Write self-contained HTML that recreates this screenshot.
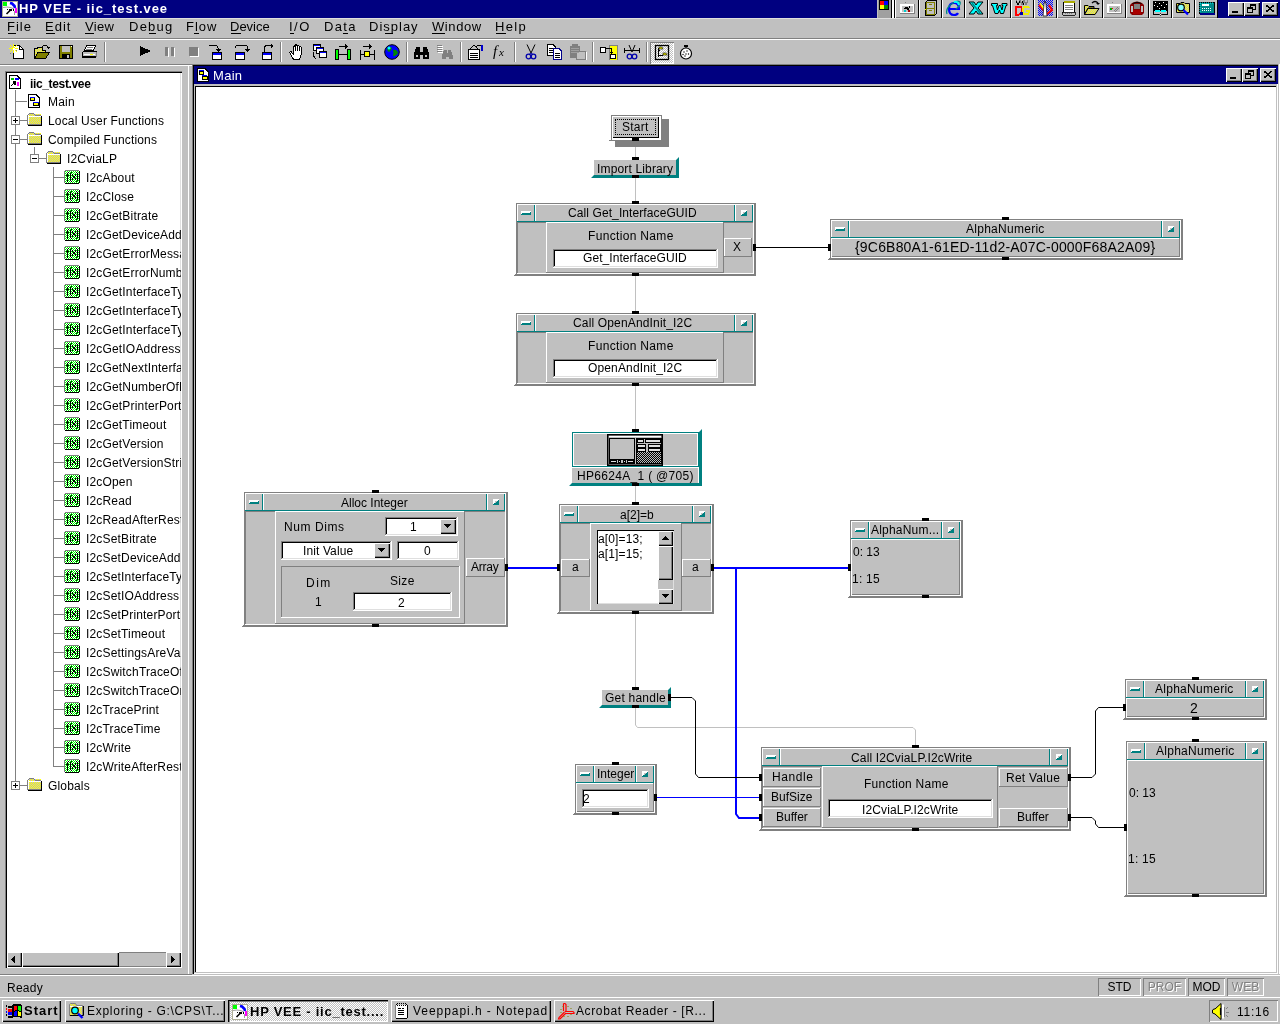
<!DOCTYPE html>
<html><head><meta charset="utf-8"><style>
html,body{margin:0;padding:0;}
body{width:1280px;height:1024px;overflow:hidden;position:relative;background:#c0c0c0;font-family:"Liberation Sans",sans-serif;}
.a{position:absolute;}
.t{position:absolute;white-space:pre;font-family:"Liberation Sans",sans-serif;will-change:transform;}
u{text-decoration:underline;text-underline-offset:1px;text-decoration-thickness:1px;}
</style></head><body>
<svg class="a" width="0" height="0" style="left:0;top:0"><defs><pattern id="chkG" width="2" height="2" patternUnits="userSpaceOnUse"><rect width="2" height="2" fill="#fff"/><rect width="1" height="1" fill="#0f0"/><rect x="1" y="1" width="1" height="1" fill="#0f0"/></pattern><pattern id="chkB" width="2" height="2" patternUnits="userSpaceOnUse"><rect width="2" height="2" fill="#00f"/><rect width="1" height="1" fill="#c0c0c0"/><rect x="1" y="1" width="1" height="1" fill="#c0c0c0"/></pattern><pattern id="chkK" width="2" height="2" patternUnits="userSpaceOnUse"><rect width="2" height="2" fill="#c0c0c0"/><rect width="1" height="1" fill="#000"/><rect x="1" y="1" width="1" height="1" fill="#000"/></pattern><pattern id="chkW" width="2" height="2" patternUnits="userSpaceOnUse"><rect width="2" height="2" fill="#fff"/><rect width="1" height="1" fill="#c0c0c0"/><rect x="1" y="1" width="1" height="1" fill="#c0c0c0"/></pattern><pattern id="chkY" width="2" height="2" patternUnits="userSpaceOnUse"><rect width="2" height="2" fill="#c0c0c0"/><rect width="1" height="1" fill="#ff0"/><rect x="1" y="1" width="1" height="1" fill="#ff0"/></pattern><symbol id="fx" viewBox="0 0 16 14"><rect x="1" y="1" width="14" height="12" fill="url(#chkG)"/><rect x="1" y="0" width="14" height="1" fill="#808080"/><rect x="0" y="1" width="1" height="12" fill="#808080"/><rect x="15" y="1" width="1" height="12" fill="#000"/><rect x="1" y="13" width="14" height="1" fill="#000"/><rect x="3" y="3" width="1" height="9" fill="#000"/><rect x="2" y="5" width="3" height="1" fill="#000"/><rect x="4" y="2" width="1" height="1" fill="#000"/><rect x="6" y="3" width="1" height="8" fill="#000"/><rect x="7" y="2" width="1" height="1" fill="#000"/><rect x="7" y="11" width="1" height="1" fill="#000"/><rect x="8" y="4" width="1" height="2" fill="#000"/><rect x="11" y="4" width="1" height="2" fill="#000"/><rect x="9" y="6" width="2" height="2" fill="#000"/><rect x="8" y="8" width="1" height="2" fill="#000"/><rect x="11" y="8" width="1" height="2" fill="#000"/><rect x="13" y="3" width="1" height="8" fill="#000"/><rect x="12" y="2" width="1" height="1" fill="#000"/><rect x="12" y="11" width="1" height="1" fill="#000"/></symbol><symbol id="fold" viewBox="0 0 15 13"><rect x="2" y="1" width="12" height="11" fill="url(#chkY)"/><rect x="1" y="3" width="13" height="9" fill="url(#chkY)"/><rect x="2" y="0" width="5" height="1" fill="#808080"/><rect x="1" y="1" width="1" height="1" fill="#808080"/><rect x="7" y="1" width="1" height="1" fill="#808080"/><rect x="8" y="2" width="6" height="1" fill="#808080"/><rect x="0" y="2" width="1" height="10" fill="#808080"/><rect x="1" y="2" width="1" height="10" fill="#fff"/><rect x="2" y="3" width="12" height="1" fill="#fff"/><rect x="14" y="3" width="1" height="10" fill="#000"/><rect x="1" y="12" width="14" height="1" fill="#000"/><rect x="1" y="11" width="13" height="1" fill="#808080"/></symbol></defs></svg>
<div class="a" style="left:0px;top:0px;width:1280px;height:18px;background:#000080;"></div>
<svg class="a" style="left:2px;top:1px" width="16" height="16" viewBox="0 0 16 16"><rect x="0.5" y="0.5" width="15" height="15" fill="#fff" stroke="#b0b098"/><rect x="1" y="1" width="4" height="4" fill="#0f0"/><path d="M8 2 L10 2.5 L12.5 5 L13 7" stroke="#00f" stroke-width="2.6" fill="none"/><rect x="13" y="7" width="2" height="5" fill="#f0f"/><path d="M1 6.5 Q7 5 12 8" stroke="#a0a0a0" stroke-width="1.2" fill="none"/><path d="M4.5 13 L8.5 9" stroke="#000" stroke-width="1.6"/><rect x="7" y="8" width="3" height="2" fill="#000"/><rect x="5" y="8" width="1" height="1" fill="#000"/><rect x="11" y="8" width="1" height="2" fill="#000"/><path d="M12.5 10 V14" stroke="#a0a0a0"/></svg>
<div class="t" style="left:19px;top:1px;font-size:13px;line-height:15px;font-weight:700;color:#fff;letter-spacing:0.950px;font-family:'Liberation Sans';">HP VEE - iic_test.vee</div>
<div class="a" style="left:877px;top:0px;width:340px;height:18px;background:#c0c0c0;"></div>
<div class="a" style="left:878px;top:0px;width:13px;height:18px;background:#a0a0a0;"></div>
<svg class="a" style="left:879px;top:0px" width="10" height="10" viewBox="0 0 10 10" shape-rendering="crispEdges"><rect x="0" y="0" width="10" height="10" fill="#000"/><rect x="1" y="1" width="4" height="4" fill="#f00"/><rect x="5" y="1" width="4" height="4" fill="#00f"/><rect x="1" y="5" width="4" height="4" fill="#ff0"/><rect x="5" y="5" width="4" height="4" fill="#080"/></svg>
<div class="a" style="left:891px;top:0px;width:1px;height:18px;background:#000;"></div>
<div class="a" style="left:892px;top:0px;width:2px;height:18px;background:#fff;"></div>
<div class="a" style="left:894px;top:0px;width:1px;height:18px;background:#000;"></div>
<div class="a" style="left:895px;top:0px;width:1px;height:18px;background:#fff;"></div>
<div class="a" style="left:896px;top:17px;width:322px;height:1px;background:#808080;"></div>
<svg class="a" style="left:899px;top:0px" width="18" height="17" viewBox="0 0 18 17" shape-rendering="crispEdges"><rect x="1" y="4" width="15" height="10" fill="#808080"/><rect x="1" y="4" width="14" height="9" fill="#fff"/><rect x="3" y="6" width="11" height="6" fill="#c0c0c0"/><path d="M6 2 L7 3" stroke="#808080"/><path d="M5 9 L8 7 L10 10 M10 6 L10 8" stroke="#000"/><rect x="5" y="10" width="2" height="2" fill="#0cc"/><rect x="9" y="10" width="2" height="2" fill="#a00"/></svg>
<div class="a" style="left:918px;top:0px;width:1px;height:18px;background:#000;"></div>
<div class="a" style="left:919px;top:0px;width:1px;height:18px;background:#fff;"></div>
<svg class="a" style="left:923px;top:0px" width="18" height="17" viewBox="0 0 18 17" shape-rendering="crispEdges"><path d="M2.5 2.5 L4.5 0.5 H13.5 V13.5 L11.5 15.5 H2.5 Z" fill="#c0c0c0" stroke="#000"/><rect x="3" y="2" width="9" height="13" fill="#808000"/><rect x="4" y="3" width="7" height="5" fill="#c0c0c0"/><rect x="4" y="9" width="7" height="5" fill="#c0c0c0"/><rect x="6" y="4" width="3" height="1" fill="#808000"/><rect x="6" y="10" width="3" height="1" fill="#808000"/><rect x="2" y="9" width="1" height="1" fill="#ff0"/></svg>
<div class="a" style="left:941px;top:0px;width:1px;height:18px;background:#000;"></div>
<div class="a" style="left:942px;top:0px;width:1px;height:18px;background:#fff;"></div>
<svg class="a" style="left:945px;top:0px" width="18" height="17" viewBox="0 0 18 17"><path d="M4 9 H14 Q14 3 9 3 Q4 3 4 9 Q4 15 9 15 Q12 15 13 13" fill="none" stroke="#00f" stroke-width="2.2"/><path d="M2 14 Q0 8 8 3 Q13 0 15 2 Q16 5 11 9" fill="none" stroke="#088" stroke-width="1.3"/><path d="M9 2 Q13 1 14 5" stroke="#0ff" stroke-width="2" fill="none"/></svg>
<div class="a" style="left:964px;top:0px;width:1px;height:18px;background:#000;"></div>
<div class="a" style="left:965px;top:0px;width:1px;height:18px;background:#fff;"></div>
<svg class="a" style="left:968px;top:0px" width="18" height="17" viewBox="0 0 18 17"><path d="M1 2 H6 L8 5 L10 2 H15 L10 8 L15 14 H10 L8 11 L6 14 H1 L6 8 Z" fill="#0ff" stroke="#000"/><path d="M4 3 L12 13" stroke="#088" stroke-width="1.5"/></svg>
<div class="a" style="left:987px;top:0px;width:1px;height:18px;background:#000;"></div>
<div class="a" style="left:988px;top:0px;width:1px;height:18px;background:#fff;"></div>
<svg class="a" style="left:991px;top:0px" width="18" height="17" viewBox="0 0 18 17"><path d="M0.5 3.5 H6.5 V5.5 L5.5 5.5 L6.5 10 L8 5.5 H9.5 L11 10 L12 5.5 H11 V3.5 H16 V5.5 H15 L12.5 13.5 H9.5 L8.5 10 L7 13.5 H4 L1.5 5.5 H0.5 Z" fill="#0ff" stroke="#000"/></svg>
<div class="a" style="left:1010px;top:0px;width:1px;height:18px;background:#000;"></div>
<div class="a" style="left:1011px;top:0px;width:1px;height:18px;background:#fff;"></div>
<svg class="a" style="left:1014px;top:0px" width="18" height="17" viewBox="0 0 18 17" shape-rendering="crispEdges"><path d="M2 0 L4 5 L6 0 L8 5 L10 0 L12 5 L14 0" stroke="#808080" fill="none"/><path d="M2 1 L4 5 L6 1 M8 1 L10 5" stroke="#000" fill="none"/><path d="M1.5 6.5 H5 Q8 6.5 8 10.5 Q8 14.5 5 14.5 H1.5 Z" fill="none" stroke="#f00" stroke-width="2"/><path d="M15 8 Q14 6.5 12 6.5 Q9 6.5 9 10.5 Q9 14.5 12 14.5 Q15 14.5 15 11 H12" fill="none" stroke="#ee0" stroke-width="2"/><rect x="6" y="12" width="3" height="3" fill="#00a"/></svg>
<div class="a" style="left:1033px;top:0px;width:1px;height:18px;background:#000;"></div>
<div class="a" style="left:1034px;top:0px;width:1px;height:18px;background:#fff;"></div>
<svg class="a" style="left:1037px;top:0px" width="18" height="17" viewBox="0 0 18 17"><rect x="1" y="0" width="15" height="16" fill="url(#chkB)"/><path d="M2 5 L10 14 L15 10 L12 5" stroke="#f00" stroke-width="2" fill="none"/><path d="M3 3 L9 12" stroke="#ff0" stroke-width="1.5"/><path d="M6 16 L7 4 L8 1 L9 4 L10 16 Z" fill="#fff" stroke="#000" stroke-width="0.7"/></svg>
<div class="a" style="left:1056px;top:0px;width:1px;height:18px;background:#000;"></div>
<div class="a" style="left:1057px;top:0px;width:1px;height:18px;background:#fff;"></div>
<svg class="a" style="left:1061px;top:0px" width="18" height="17" viewBox="0 0 18 17" shape-rendering="crispEdges"><rect x="2.5" y="2.5" width="11" height="11" fill="#fff" stroke="#000"/><rect x="3" y="1" width="11" height="2" fill="#aa0"/><path d="M4 5H12M4 7H12M4 9H12" stroke="#808080"/><path d="M1 12 H14 V15 H2 Z" fill="#c0c0c0" stroke="#000" stroke-width="0.8"/><path d="M4 13.5 H12" stroke="#808080" stroke-dasharray="1 1"/></svg>
<div class="a" style="left:1079px;top:0px;width:1px;height:18px;background:#000;"></div>
<div class="a" style="left:1080px;top:0px;width:1px;height:18px;background:#fff;"></div>
<svg class="a" style="left:1083px;top:0px" width="18" height="17" viewBox="0 0 18 17"><path d="M1.5 5.5 H5 L6 6.5 H11 V8 H5 L1.5 14.5 Z" fill="url(#chkY)" stroke="#000"/><path d="M5 8.5 H16 L12 14.5 H1.5 Z" fill="url(#chkY)" stroke="#000"/><path d="M9 3 Q12 0 15 3" stroke="#000" fill="none" stroke-width="1.3"/><path d="M13 3 H17 L15 5 Z" fill="#000"/></svg>
<div class="a" style="left:1102px;top:0px;width:1px;height:18px;background:#000;"></div>
<div class="a" style="left:1103px;top:0px;width:1px;height:18px;background:#fff;"></div>
<svg class="a" style="left:1106px;top:0px" width="18" height="17" viewBox="0 0 18 17" shape-rendering="crispEdges"><rect x="1" y="4" width="15" height="10" fill="#808080"/><rect x="1" y="4" width="14" height="9" fill="#fff"/><rect x="3" y="6" width="11" height="6" fill="#c0c0c0"/><path d="M6 2 L7 3" stroke="#808080"/><path d="M8 11 L12 7 M9 12 L13 8" stroke="#808080"/><rect x="4" y="8" width="2" height="2" fill="#0a0"/><rect x="6" y="8" width="1" height="1" fill="#f00"/></svg>
<div class="a" style="left:1125px;top:0px;width:1px;height:18px;background:#000;"></div>
<div class="a" style="left:1126px;top:0px;width:1px;height:18px;background:#fff;"></div>
<svg class="a" style="left:1129px;top:0px" width="18" height="17" viewBox="0 0 18 17"><path d="M3 3 Q8 0 13 3 L15 5 V13 L13 15 H3 L1 13 V5 Z" fill="#800" /><path d="M3.5 3.5 Q8 1 12.5 3.5" stroke="#000" fill="none"/><rect x="5" y="4" width="6" height="5" fill="#808080"/><rect x="4" y="10" width="8" height="4" fill="#a00"/><rect x="2" y="6" width="2" height="6" fill="#c0c0c0"/><rect x="12" y="6" width="2" height="6" fill="#c0c0c0"/></svg>
<div class="a" style="left:1148px;top:0px;width:1px;height:18px;background:#000;"></div>
<div class="a" style="left:1149px;top:0px;width:1px;height:18px;background:#fff;"></div>
<svg class="a" style="left:1152px;top:0px" width="18" height="17" viewBox="0 0 18 17" shape-rendering="crispEdges"><rect x="1" y="1" width="15" height="10" fill="#000"/><rect x="3" y="2" width="1" height="1" fill="#fff"/><rect x="7" y="3" width="1" height="1" fill="#fff"/><rect x="11" y="2" width="1" height="1" fill="#fff"/><rect x="2" y="5" width="1" height="1" fill="#fff"/><rect x="5" y="6" width="1" height="1" fill="#fff"/><rect x="9" y="5" width="1" height="1" fill="#fff"/><rect x="14" y="4" width="1" height="1" fill="#fff"/><rect x="7" y="8" width="1" height="1" fill="#fff"/><rect x="12" y="7" width="1" height="1" fill="#fff"/><path d="M1.5 10 V14.5 H15.5 V10" stroke="#000" fill="none"/><rect x="3" y="10" width="5" height="2" fill="#0ff"/><rect x="9" y="10" width="5" height="2" fill="#0ff"/><circle cx="8.5" cy="14.5" r="1.3" fill="#fff" stroke="#000" stroke-width="0.8"/></svg>
<div class="a" style="left:1171px;top:0px;width:1px;height:18px;background:#000;"></div>
<div class="a" style="left:1172px;top:0px;width:1px;height:18px;background:#fff;"></div>
<svg class="a" style="left:1175px;top:0px" width="18" height="17" viewBox="0 0 18 17"><path d="M1.5 3.5 H5 L6 2.5 H9 L10 3.5 H14.5 V12.5 H1.5 Z" fill="url(#chkY)" stroke="#000"/><circle cx="6" cy="7.5" r="3.3" fill="#8ff" stroke="#000" stroke-width="1.2"/><path d="M8.5 10 L13 14.5" stroke="#00f" stroke-width="2.2"/></svg>
<div class="a" style="left:1194px;top:0px;width:1px;height:18px;background:#000;"></div>
<div class="a" style="left:1195px;top:0px;width:1px;height:18px;background:#fff;"></div>
<svg class="a" style="left:1198px;top:0px" width="18" height="17" viewBox="0 0 18 17"><rect x="1.5" y="2.5" width="15" height="11" fill="#088" stroke="#000"/><rect x="2" y="13" width="15" height="2" fill="#008"/><rect x="4" y="4" width="7" height="2" fill="#fff"/><path d="M4 8.5H13M4 10.5H13" stroke="#fff" stroke-dasharray="1 1"/><path d="M2 3 V13 M2 3 H16" stroke="#0ff" stroke-dasharray="1 1"/></svg>
<div class="a" style="left:1228px;top:2px;width:16px;height:14px;background:#c0c0c0;box-shadow:inset 1px 1px #fff,inset -1px -1px #000,inset -2px -2px #808080;"></div>
<div class="a" style="left:1232px;top:11px;width:6px;height:2px;background:#000;"></div>
<div class="a" style="left:1244px;top:2px;width:16px;height:14px;background:#c0c0c0;box-shadow:inset 1px 1px #fff,inset -1px -1px #000,inset -2px -2px #808080;"></div>
<svg class="a" style="left:1247px;top:4px" width="10" height="9" viewBox="0 0 10 9" shape-rendering="crispEdges"><rect x="3.5" y="0.5" width="5" height="5" fill="none" stroke="#000"/><rect x="3" y="0" width="6" height="2" fill="#000"/><rect x="0.5" y="3.5" width="5" height="5" fill="#c0c0c0" stroke="#000"/><rect x="0" y="3" width="6" height="2" fill="#000"/></svg>
<div class="a" style="left:1262px;top:2px;width:16px;height:14px;background:#c0c0c0;box-shadow:inset 1px 1px #fff,inset -1px -1px #000,inset -2px -2px #808080;"></div>
<svg class="a" style="left:1266px;top:5px" width="8" height="7" viewBox="0 0 8 7" shape-rendering="crispEdges"><path d="M0 0 L8 7 M8 0 L0 7" stroke="#000" stroke-width="1.6"/></svg>
<div class="a" style="left:1217px;top:0px;width:1px;height:18px;background:#000;"></div>
<div class="a" style="left:0px;top:18px;width:1280px;height:1px;background:#dfdfdf;"></div>
<div class="t" style="left:7px;top:19px;font-size:13px;line-height:15px;font-weight:400;color:#000;letter-spacing:1.000px;font-family:'Liberation Sans';">File</div>
<div class="a" style="left:8px;top:33px;width:8px;height:1px;background:#000;"></div>
<div class="t" style="left:45px;top:19px;font-size:13px;line-height:15px;font-weight:400;color:#000;letter-spacing:1.000px;font-family:'Liberation Sans';">Edit</div>
<div class="a" style="left:46px;top:33px;width:9px;height:1px;background:#000;"></div>
<div class="t" style="left:85px;top:19px;font-size:13px;line-height:15px;font-weight:400;color:#000;letter-spacing:0.333px;font-family:'Liberation Sans';">View</div>
<div class="a" style="left:85px;top:33px;width:9px;height:1px;background:#000;"></div>
<div class="t" style="left:129px;top:19px;font-size:13px;line-height:15px;font-weight:400;color:#000;letter-spacing:1.250px;font-family:'Liberation Sans';">Debug</div>
<div class="a" style="left:149px;top:33px;width:7px;height:1px;background:#000;"></div>
<div class="t" style="left:186px;top:19px;font-size:13px;line-height:15px;font-weight:400;color:#000;letter-spacing:1.000px;font-family:'Liberation Sans';">Flow</div>
<div class="a" style="left:194px;top:33px;width:5px;height:1px;background:#000;"></div>
<div class="t" style="left:230px;top:19px;font-size:13px;line-height:15px;font-weight:400;color:#000;letter-spacing:0.000px;font-family:'Liberation Sans';">Device</div>
<div class="a" style="left:231px;top:33px;width:10px;height:1px;background:#000;"></div>
<div class="t" style="left:289px;top:19px;font-size:13px;line-height:15px;font-weight:400;color:#000;letter-spacing:1.500px;font-family:'Liberation Sans';">I/O</div>
<div class="a" style="left:290px;top:33px;width:4px;height:1px;background:#000;"></div>
<div class="t" style="left:324px;top:19px;font-size:13px;line-height:15px;font-weight:400;color:#000;letter-spacing:1.333px;font-family:'Liberation Sans';">Data</div>
<div class="a" style="left:343px;top:33px;width:5px;height:1px;background:#000;"></div>
<div class="t" style="left:369px;top:19px;font-size:13px;line-height:15px;font-weight:400;color:#000;letter-spacing:1.000px;font-family:'Liberation Sans';">Display</div>
<div class="a" style="left:385px;top:33px;width:8px;height:1px;background:#000;"></div>
<div class="t" style="left:432px;top:19px;font-size:13px;line-height:15px;font-weight:400;color:#000;letter-spacing:0.600px;font-family:'Liberation Sans';">Window</div>
<div class="a" style="left:432px;top:33px;width:13px;height:1px;background:#000;"></div>
<div class="t" style="left:495px;top:19px;font-size:13px;line-height:15px;font-weight:400;color:#000;letter-spacing:1.333px;font-family:'Liberation Sans';">Help</div>
<div class="a" style="left:496px;top:33px;width:10px;height:1px;background:#000;"></div>
<div class="a" style="left:0px;top:38px;width:1280px;height:1px;background:#808080;"></div>
<div class="a" style="left:0px;top:39px;width:1280px;height:1px;background:#fff;"></div>
<div class="a" style="left:0px;top:64px;width:1280px;height:1px;background:#808080;"></div>
<div class="a" style="left:0px;top:65px;width:193px;height:1px;background:#fff;"></div>
<div class="a" style="left:104px;top:42px;width:1px;height:20px;background:#808080;"></div>
<div class="a" style="left:105px;top:42px;width:1px;height:20px;background:#fff;"></div>
<div class="a" style="left:280px;top:42px;width:1px;height:20px;background:#808080;"></div>
<div class="a" style="left:281px;top:42px;width:1px;height:20px;background:#fff;"></div>
<div class="a" style="left:406px;top:42px;width:1px;height:20px;background:#808080;"></div>
<div class="a" style="left:407px;top:42px;width:1px;height:20px;background:#fff;"></div>
<div class="a" style="left:460px;top:42px;width:1px;height:20px;background:#808080;"></div>
<div class="a" style="left:461px;top:42px;width:1px;height:20px;background:#fff;"></div>
<div class="a" style="left:514px;top:42px;width:1px;height:20px;background:#808080;"></div>
<div class="a" style="left:515px;top:42px;width:1px;height:20px;background:#fff;"></div>
<div class="a" style="left:592px;top:42px;width:1px;height:20px;background:#808080;"></div>
<div class="a" style="left:593px;top:42px;width:1px;height:20px;background:#fff;"></div>
<div class="a" style="left:646px;top:42px;width:1px;height:20px;background:#808080;"></div>
<div class="a" style="left:647px;top:42px;width:1px;height:20px;background:#fff;"></div>
<svg class="a" style="left:9px;top:44px" width="17" height="16" viewBox="0 0 17 16" shape-rendering="crispEdges"><path d="M4.5 1.5 H10.5 L14.5 5.5 V14.5 H4.5 Z" fill="#fff" stroke="#000"/><path d="M10.5 1.5 V5.5 H14.5" fill="none" stroke="#000"/><path d="M1 1 L8 8 M8 1 L1 8 M4.5 0 V9 M0 4.5 H9" stroke="#ff0"/><rect x="4" y="4" width="2" height="2" fill="#fff"/><rect x="1" y="9" width="1" height="1" fill="#808080"/><rect x="7" y="6" width="1" height="1" fill="#808080"/></svg>
<svg class="a" style="left:33px;top:44px" width="17" height="16" viewBox="0 0 17 16" shape-rendering="crispEdges"><path d="M1.5 4.5 H4 L5 3.5 H9 V6.5 H12.5 V8.5 H5 L1.5 14.5 Z" fill="url(#chkY)" stroke="#000"/><path d="M5 8.5 H16.5 L12.5 14.5 H1.5 Z" fill="#808000" stroke="#000"/><path d="M9 3 Q12 -1 15 3" stroke="#000" fill="none"/><path d="M13 3 H17 L15 5 Z" fill="#000"/></svg>
<svg class="a" style="left:58px;top:44px" width="16" height="16" viewBox="0 0 16 16" shape-rendering="crispEdges"><rect x="1.5" y="1.5" width="13" height="13" fill="#808000" stroke="#000"/><rect x="4" y="2" width="8" height="6" fill="#c0c0c0"/><rect x="4" y="10" width="8" height="5" fill="#000"/><rect x="9" y="11" width="2" height="3" fill="#c0c0c0"/><rect x="13" y="2" width="1" height="1" fill="#fff"/></svg>
<svg class="a" style="left:81px;top:44px" width="18" height="16" viewBox="0 0 18 16" shape-rendering="crispEdges"><path d="M5.5 1.5 H14.5 L12.5 6.5 H3.5 Z" fill="#fff" stroke="#000"/><path d="M6 3.5 H12 M5 5 H11" stroke="#808080"/><rect x="1.5" y="7.5" width="14" height="6" rx="1.5" fill="#c0c0c0" stroke="#000"/><rect x="2" y="12" width="13" height="2" fill="#000"/><path d="M3 10.5 H14" stroke="#fff"/><rect x="9" y="10" width="3" height="1" fill="#ff0"/><path d="M15.5 8 V13" stroke="#808080"/></svg>
<svg class="a" style="left:140px;top:46px" width="12" height="10" viewBox="0 0 12 10" shape-rendering="crispEdges"><path d="M0 0 L11 5 L0 10 Z" fill="#000"/></svg>
<div class="a" style="left:165px;top:47px;width:3px;height:9px;background:#808080;"></div>
<div class="a" style="left:168px;top:48px;width:1px;height:9px;background:#fff;"></div>
<div class="a" style="left:171px;top:47px;width:3px;height:9px;background:#808080;"></div>
<div class="a" style="left:174px;top:48px;width:1px;height:9px;background:#fff;"></div>
<div class="a" style="left:189px;top:47px;width:9px;height:9px;background:#808080;"></div>
<div class="a" style="left:190px;top:56px;width:9px;height:1px;background:#fff;"></div>
<div class="a" style="left:198px;top:48px;width:1px;height:9px;background:#fff;"></div>
<svg class="a" style="left:209px;top:44px" width="16" height="16" viewBox="0 0 16 16" shape-rendering="crispEdges"><rect x="3.5" y="8.5" width="9" height="7" fill="#fff" stroke="#000"/><rect x="4" y="9" width="8" height="2" fill="#00f"/><path d="M0 1.5 H6 Q9 1.5 9 4 V7" fill="none" stroke="#000"/><path d="M6 5 H12 L9 8 Z" fill="#000"/></svg>
<svg class="a" style="left:234px;top:44px" width="16" height="16" viewBox="0 0 16 16" shape-rendering="crispEdges"><rect x="1.5" y="8.5" width="9" height="7" fill="#fff" stroke="#000"/><rect x="2" y="9" width="8" height="2" fill="#00f"/><path d="M1.5 4 V2.5 Q2 1.5 5 1.5 H11 Q13.5 1.5 13.5 4 V6" fill="none" stroke="#000"/><path d="M11 5 H16 L13.5 8 Z" fill="#000"/></svg>
<svg class="a" style="left:259px;top:44px" width="16" height="16" viewBox="0 0 16 16" shape-rendering="crispEdges"><rect x="3.5" y="8.5" width="9" height="7" fill="#fff" stroke="#000"/><rect x="4" y="9" width="8" height="2" fill="#00f"/><path d="M5.5 8 V4 Q5.5 1.5 8 1.5 H13" fill="none" stroke="#000"/><path d="M12 0 L15 2 L12 4 Z" fill="#000"/></svg>
<svg class="a" style="left:289px;top:44px" width="16" height="16" viewBox="0 0 16 16" shape-rendering="crispEdges"><path d="M4.5 15.5 L1 9 Q0.5 7.5 2 7.5 L4 10 V3 Q4 2 5 2 Q6 2 6 3 V7 V1.5 Q6 0.5 7 0.5 Q8 0.5 8 1.5 V7 V2 Q8 1 9 1 Q10 1 10 2 V7 V3 Q10 2 11 2 Q12 2 12 3 V11 L10.5 15.5 Z" fill="#fff" stroke="#000"/></svg>
<svg class="a" style="left:312px;top:44px" width="16" height="16" viewBox="0 0 16 16" shape-rendering="crispEdges"><rect x="1.5" y="0.5" width="7" height="6" fill="#fff" stroke="#000"/><rect x="2" y="1" width="6" height="1" fill="#00f"/><rect x="4.5" y="3.5" width="7" height="6" fill="#fff" stroke="#000"/><rect x="5" y="4" width="6" height="1" fill="#00f"/><rect x="7.5" y="7.5" width="7" height="6" fill="#fff" stroke="#000"/><rect x="8" y="8" width="6" height="1" fill="#00f"/><path d="M1.5 8 V12 L4 15" stroke="#000" fill="none"/></svg>
<svg class="a" style="left:335px;top:44px" width="17" height="16" viewBox="0 0 17 16" shape-rendering="crispEdges"><rect x="0.5" y="5.5" width="3" height="10" fill="#0f0" stroke="#000"/><rect x="12.5" y="5.5" width="3" height="10" fill="#0f0" stroke="#000"/><path d="M4 10.5 H12" stroke="#000"/><path d="M4 2.5 H11" stroke="#000" stroke-width="1.5"/><path d="M10 0 L13 2.5 L10 5 Z" fill="#000"/></svg>
<svg class="a" style="left:359px;top:44px" width="17" height="16" viewBox="0 0 17 16" shape-rendering="crispEdges"><path d="M1.5 6 V15 M1 6 H2 M1 15 H2 M15.5 6 V15 M15 6 H16 M15 15 H16" stroke="#000"/><path d="M2 10.5 H15" stroke="#000"/><rect x="5.5" y="7.5" width="5" height="5" fill="#ff0" stroke="#000"/><path d="M4 2.5 H11" stroke="#000" stroke-width="1.5"/><path d="M10 0 L13 2.5 L10 5 Z" fill="#000"/></svg>
<svg class="a" style="left:384px;top:44px" width="16" height="16" viewBox="0 0 16 16"><circle cx="8" cy="8" r="7.3" fill="#00f" stroke="#000"/><path d="M3 4 Q6 2 8 4 Q7 7 5 8 Q3 7 3 4 Z M9 6 Q13 5 14 9 Q12 13 9 12 Q10 9 9 6 Z" fill="#080"/><circle cx="5" cy="4" r="1.5" fill="#0ff"/></svg>
<svg class="a" style="left:414px;top:44px" width="16" height="16" viewBox="0 0 16 16" shape-rendering="crispEdges"><path d="M2 3 H6 V8 H9 V3 H13 L15 10 V15 H9 V11 H6 V15 H0 V10 Z" fill="#000"/><rect x="2" y="11" width="2" height="2" fill="#c0c0c0"/><rect x="11" y="11" width="2" height="2" fill="#c0c0c0"/></svg>
<svg class="a" style="left:437px;top:44px" width="18" height="16" viewBox="0 0 18 16" shape-rendering="crispEdges"><path d="M0 1 H5 M0 3 H5 M0 5 H5 M0 7 H5" stroke="#808080"/><path d="M7 6 H10 V9 H11 V6 H14 L16 12 V15 H12 V13 H9 V15 H5 V12 Z" fill="#808080"/><path d="M1 2H6M1 4H6M1 6H6M1 8H6" stroke="#fff"/></svg>
<svg class="a" style="left:467px;top:44px" width="18" height="16" viewBox="0 0 18 16" shape-rendering="crispEdges"><rect x="1.5" y="5.5" width="11" height="10" fill="#fff" stroke="#000"/><path d="M3 9 H11 M3 11 H11 M3 13 H11" stroke="#000"/><path d="M2 6 L7 1 L11 5" fill="none" stroke="#000"/><rect x="14" y="1" width="2" height="6" fill="#00c"/><path d="M9 3 Q11 0 14 2" stroke="#000" fill="none"/></svg>
<svg class="a" style="left:492px;top:44px" width="16" height="16" viewBox="0 0 16 16"><text x="1" y="12" font-family="Liberation Serif" font-style="italic" font-size="15" fill="#000">f</text><text x="7" y="12" font-family="Liberation Serif" font-style="italic" font-size="11" fill="#000">x</text></svg>
<svg class="a" style="left:525px;top:44px" width="12" height="16" viewBox="0 0 12 16"><path d="M2 0.5 L6 9 L10 0.5" stroke="#000" fill="none"/><circle cx="3.5" cy="12.5" r="2.3" fill="none" stroke="#00a" stroke-width="1.3"/><circle cx="8.5" cy="12.5" r="2.3" fill="none" stroke="#00a" stroke-width="1.3"/><path d="M6 9 L4 10.5 M6 9 L8 10.5" stroke="#00a"/></svg>
<svg class="a" style="left:547px;top:44px" width="16" height="16" viewBox="0 0 16 16" shape-rendering="crispEdges"><path d="M0.5 0.5 H6 L8.5 3 V11.5 H0.5 Z" fill="#fff" stroke="#000"/><path d="M6.5 4.5 H12 L14.5 7 V15.5 H6.5 Z" fill="#fff" stroke="#00008a"/><path d="M8 9H13M8 11H13M8 13H13M2 4H6M2 6H6M2 8H6" stroke="#000"/></svg>
<svg class="a" style="left:569px;top:44px" width="18" height="16" viewBox="0 0 18 16" shape-rendering="crispEdges"><rect x="1" y="2" width="10" height="12" fill="#808080"/><rect x="3" y="0" width="6" height="3" fill="#808080"/><rect x="7.5" y="7.5" width="9" height="8" fill="#c0c0c0" stroke="#808080"/><path d="M8 16.5 H17.5 V8" stroke="#fff" fill="none"/><path d="M2 4 H10 M2 6 H10 M2 8 H10" stroke="#a0a0a0"/></svg>
<svg class="a" style="left:600px;top:44px" width="18" height="16" viewBox="0 0 18 16" shape-rendering="crispEdges"><rect x="9" y="1" width="8" height="15" fill="#ff0" stroke="#808080"/><rect x="0.5" y="3.5" width="5" height="5" fill="#fff" stroke="#000"/><path d="M5.5 4.5 H11 V9" stroke="#000" fill="none"/><path d="M9 8 H13 L11 10 Z" fill="#000"/><rect x="10.5" y="10.5" width="5" height="4" fill="#fff" stroke="#000"/></svg>
<svg class="a" style="left:623px;top:44px" width="18" height="16" viewBox="0 0 18 16"><path d="M1.5 4 V9 M1 6.5 H17 M16.5 4 V9" stroke="#000"/><path d="M6 1 L9 8 L12 1" stroke="#000" fill="none"/><circle cx="6.5" cy="12.5" r="2.3" fill="none" stroke="#00a" stroke-width="1.3"/><circle cx="11.5" cy="12.5" r="2.3" fill="none" stroke="#00a" stroke-width="1.3"/></svg>
<div class="a" style="left:650px;top:42px;width:24px;height:22px;background:#e0e0e0;box-shadow:inset 1px 1px #808080,inset -1px -1px #fff;background-image:repeating-conic-gradient(#c0c0c0 0 25%,#fff 0 50%);background-size:2px 2px;"></div>
<svg class="a" style="left:654px;top:44px" width="17" height="18" viewBox="0 0 17 18"><rect x="1" y="1" width="14" height="15" fill="url(#chkW)"/><rect x="1.5" y="1.5" width="13" height="14" fill="none" stroke="#000" stroke-width="1.3"/><path d="M4.5 4 V13 M4.5 6.5 H6 M4.5 11.5 H9" stroke="#000"/><path d="M5 3 H8 L9 5 H5 Z" fill="#ee0" stroke="#000" stroke-width="0.6"/><path d="M9 9 H12 L13 11 H9 Z" fill="#ee0" stroke="#000" stroke-width="0.6"/></svg>
<svg class="a" style="left:679px;top:44px" width="14" height="16" viewBox="0 0 14 16"><circle cx="7" cy="9.5" r="5.5" fill="#fff" stroke="#000" stroke-width="1.2"/><rect x="5" y="1" width="4" height="2" fill="#000"/><path d="M7 3V4" stroke="#000"/><circle cx="5" cy="8" r="0.7" fill="#000"/><circle cx="8" cy="7" r="0.7" fill="#000"/><circle cx="9.5" cy="10" r="0.7" fill="#000"/><circle cx="6" cy="12" r="0.7" fill="#000"/><circle cx="4" cy="10.5" r="0.7" fill="#000"/><circle cx="7" cy="10" r="0.7" fill="#000"/></svg>
<div class="a" style="left:188px;top:65px;width:1px;height:910px;background:#fff;"></div>
<div class="a" style="left:5px;top:71px;width:177px;height:897px;background:#fff;box-shadow:inset 1px 1px #808080,inset 2px 2px #000,inset -1px -1px #fff,inset -2px -2px #dfdfdf;"></div>
<div class="a" style="left:7px;top:952px;width:174px;height:15px;background:#c0c0c0;"></div>
<div class="a" style="left:7px;top:952px;width:174px;height:1px;background:#808080;"></div>
<div class="a" style="left:7px;top:966px;width:174px;height:1px;background:#808080;"></div>
<div class="a" style="left:7px;top:952px;width:15px;height:15px;background:#c0c0c0;box-shadow:inset 1px 1px #fff,inset -1px -1px #000,inset -2px -2px #808080;"></div>
<svg class="a" style="left:11px;top:955px" width="6" height="9" viewBox="0 0 6 9" shape-rendering="crispEdges"><path d="M4 0 L0 4.5 L4 9 Z" fill="#000"/></svg>
<div class="a" style="left:22px;top:952px;width:97px;height:15px;background:#c0c0c0;box-shadow:inset 1px 1px #fff,inset -1px -1px #000,inset -2px -2px #808080;"></div>
<div class="a" style="left:166px;top:952px;width:15px;height:15px;background:#c0c0c0;box-shadow:inset 1px 1px #fff,inset -1px -1px #000,inset -2px -2px #808080;"></div>
<svg class="a" style="left:171px;top:955px" width="6" height="9" viewBox="0 0 6 9" shape-rendering="crispEdges"><path d="M0 0 L4 4.5 L0 9 Z" fill="#000"/></svg>
<div class="a" style="left:192px;top:64px;width:1088px;height:1px;background:#808080;"></div>
<div class="a" style="left:193px;top:65px;width:1087px;height:1px;background:#000;"></div>
<div class="a" style="left:192px;top:64px;width:1px;height:911px;background:#808080;"></div>
<div class="a" style="left:193px;top:65px;width:1px;height:909px;background:#000;"></div>
<div class="a" style="left:194px;top:66px;width:1084px;height:18px;background:#000080;"></div>
<svg class="a" style="left:197px;top:68px" width="12" height="14" viewBox="0 0 12 14" shape-rendering="crispEdges"><path d="M0.5 0.5 H8 L11.5 4 V13.5 H0.5 Z" fill="#fff" stroke="#000"/><rect x="2" y="3" width="4" height="3" fill="#ff0" stroke="#000" stroke-width="1"/><rect x="2" y="2" width="5" height="1" fill="#00f"/><rect x="5" y="8" width="5" height="3" fill="#ff0" stroke="#000" stroke-width="1"/><rect x="5" y="7" width="5" height="1" fill="#00f"/></svg>
<div class="t" style="left:213px;top:68px;font-size:13px;line-height:15px;font-weight:400;color:#fff;letter-spacing:0.3px;">Main</div>
<div class="a" style="left:1226px;top:68px;width:16px;height:14px;background:#c0c0c0;box-shadow:inset 1px 1px #fff,inset -1px -1px #000,inset -2px -2px #808080;"></div>
<div class="a" style="left:1230px;top:77px;width:6px;height:2px;background:#000;"></div>
<div class="a" style="left:1242px;top:68px;width:16px;height:14px;background:#c0c0c0;box-shadow:inset 1px 1px #fff,inset -1px -1px #000,inset -2px -2px #808080;"></div>
<svg class="a" style="left:1245px;top:70px" width="10" height="9" viewBox="0 0 10 9" shape-rendering="crispEdges"><rect x="3.5" y="0.5" width="5" height="5" fill="none" stroke="#000"/><rect x="3" y="0" width="6" height="2" fill="#000"/><rect x="0.5" y="3.5" width="5" height="5" fill="#c0c0c0" stroke="#000"/><rect x="0" y="3" width="6" height="2" fill="#000"/></svg>
<div class="a" style="left:1260px;top:68px;width:16px;height:14px;background:#c0c0c0;box-shadow:inset 1px 1px #fff,inset -1px -1px #000,inset -2px -2px #808080;"></div>
<svg class="a" style="left:1264px;top:71px" width="8" height="7" viewBox="0 0 8 7" shape-rendering="crispEdges"><path d="M0 0 L8 7 M8 0 L0 7" stroke="#000" stroke-width="1.6"/></svg>
<div class="a" style="left:194px;top:84px;width:1084px;height:2px;background:#c0c0c0;"></div>
<div class="a" style="left:194px;top:86px;width:1083px;height:1px;background:#000;"></div>
<div class="a" style="left:194px;top:84px;width:1px;height:890px;background:#c0c0c0;"></div>
<div class="a" style="left:195px;top:86px;width:1px;height:886px;background:#000;"></div>
<div class="a" style="left:196px;top:87px;width:1080px;height:885px;background:#fff;"></div>
<div class="a" style="left:1276px;top:86px;width:1px;height:887px;background:#c0c0c0;"></div>
<div class="a" style="left:1277px;top:84px;width:1px;height:890px;background:#fff;"></div>
<div class="a" style="left:1278px;top:64px;width:1px;height:911px;background:#c0c0c0;"></div>
<div class="a" style="left:1279px;top:64px;width:1px;height:911px;background:#fff;"></div>
<div class="a" style="left:195px;top:972px;width:1082px;height:1px;background:#c0c0c0;"></div>
<div class="a" style="left:194px;top:973px;width:1084px;height:1px;background:#fff;"></div>
<div class="a" style="left:192px;top:974px;width:1088px;height:1px;background:#c0c0c0;"></div>
<div class="a" style="left:0px;top:974px;width:192px;height:1px;background:#808080;"></div>
<div class="a" style="left:0px;top:975px;width:1280px;height:1px;background:#fff;"></div>
<div class="t" style="left:7px;top:981px;font-size:12px;line-height:14px;font-weight:400;color:#000;letter-spacing:0.250px;font-family:'Liberation Sans';">Ready</div>
<div class="a" style="left:1098px;top:978px;width:43px;height:18px;background:#c0c0c0;box-shadow:inset 1px 1px #808080,inset -1px -1px #fff;"></div>
<div class="t" style="left:1098px;top:980px;width:43px;text-align:center;font-size:12px;line-height:14px;font-weight:400;color:#000;">STD</div>
<div class="a" style="left:1143px;top:978px;width:43px;height:18px;background:#c0c0c0;box-shadow:inset 1px 1px #808080,inset -1px -1px #fff;"></div>
<div class="t" style="left:1144px;top:981px;width:43px;text-align:center;font-size:12px;line-height:14px;font-weight:400;color:#fff;">PROF</div>
<div class="t" style="left:1143px;top:980px;width:43px;text-align:center;font-size:12px;line-height:14px;font-weight:400;color:#808080;">PROF</div>
<div class="a" style="left:1188px;top:978px;width:37px;height:18px;background:#c0c0c0;box-shadow:inset 1px 1px #808080,inset -1px -1px #fff;"></div>
<div class="t" style="left:1188px;top:980px;width:37px;text-align:center;font-size:12px;line-height:14px;font-weight:400;color:#000;">MOD</div>
<div class="a" style="left:1227px;top:978px;width:37px;height:18px;background:#c0c0c0;box-shadow:inset 1px 1px #808080,inset -1px -1px #fff;"></div>
<div class="t" style="left:1228px;top:981px;width:37px;text-align:center;font-size:12px;line-height:14px;font-weight:400;color:#fff;">WEB</div>
<div class="t" style="left:1227px;top:980px;width:37px;text-align:center;font-size:12px;line-height:14px;font-weight:400;color:#808080;">WEB</div>
<div class="a" style="left:0px;top:996px;width:1280px;height:1px;background:#c0c0c0;"></div>
<div class="a" style="left:0px;top:997px;width:1280px;height:1px;background:#fff;"></div>
<div class="a" style="left:0px;top:998px;width:1280px;height:26px;background:#c0c0c0;"></div>
<div class="a" style="left:2px;top:1000px;width:59px;height:22px;background:#c0c0c0;box-shadow:inset 1px 1px #fff,inset -1px -1px #000,inset -2px -2px #808080;"></div>
<svg class="a" style="left:4px;top:1002px" width="20" height="18" viewBox="0 0 20 18" shape-rendering="crispEdges"><rect x="2" y="3" width="1" height="2" fill="#000"/><rect x="2" y="6" width="1" height="2" fill="#f00"/><rect x="2" y="9" width="1" height="2" fill="#00f"/><rect x="2" y="12" width="1" height="2" fill="#000"/><rect x="4" y="4" width="4" height="2" fill="#000"/><rect x="4" y="7" width="4" height="3" fill="#f00"/><rect x="4" y="10" width="4" height="3" fill="#00f"/><rect x="4" y="14" width="4" height="2" fill="#000"/><path d="M8 3 L11 1.5 H14.5 L17.5 3 V16.5 L14.5 14.5 H11 L8 16 Z" fill="#000"/><path d="M9.5 4.5 L12.5 3.5 V8 L9.5 9 Z" fill="#f00"/><path d="M13.5 3.5 L16.5 4.5 V9 L13.5 8 Z" fill="#0f0"/><path d="M9.5 10 L12.5 9 V13.5 L9.5 14.5 Z" fill="#00f"/><path d="M13.5 9 L16.5 10 V14.5 L13.5 13.5 Z" fill="#ff0"/></svg>
<div class="t" style="left:24px;top:1003px;font-size:13px;line-height:15px;font-weight:700;color:#000;letter-spacing:1.000px;font-family:'Liberation Sans';">Start</div>
<div class="a" style="left:65px;top:1000px;width:160px;height:22px;background:#c0c0c0;box-shadow:inset 1px 1px #fff,inset -1px -1px #000,inset -2px -2px #808080;"></div>
<svg class="a" style="left:68px;top:1002px" width="18" height="18" viewBox="0 0 18 18"><path d="M1.5 2.5 L2.5 1.5 H7.5 L8.5 3.5 H14.5 V13.5 H1.5 Z" fill="url(#chkY)" stroke="#808080"/><path d="M2 13.5 H15.5 V4" stroke="#000" fill="none"/><rect x="2" y="4" width="12" height="1" fill="#fff"/><circle cx="7" cy="8.5" r="3.3" fill="#0ff" stroke="#000" stroke-width="1.2"/><path d="M10 11.5 L14.5 16" stroke="#00f" stroke-width="2.4"/></svg>
<div class="t" style="left:87px;top:1004px;font-size:12px;line-height:14px;font-weight:400;color:#000;letter-spacing:0.727px;font-family:'Liberation Sans';">Exploring - G:\CPS\T...</div>
<div class="a" style="left:228px;top:1000px;width:160px;height:22px;background:#e0e0e0;box-shadow:inset 1px 1px #000,inset 2px 2px #808080,inset -1px -1px #fff;background-image:repeating-conic-gradient(#c0c0c0 0 25%,#fff 0 50%);background-size:2px 2px;"></div>
<svg class="a" style="left:232px;top:1004px" width="16" height="16" viewBox="0 0 16 16"><rect x="0.5" y="0.5" width="15" height="15" fill="#fff" stroke="#b0b098"/><rect x="1" y="1" width="4" height="4" fill="#0f0"/><path d="M8 2 L10 2.5 L12.5 5 L13 7" stroke="#00f" stroke-width="2.6" fill="none"/><rect x="13" y="7" width="2" height="5" fill="#f0f"/><path d="M1 6.5 Q7 5 12 8" stroke="#a0a0a0" stroke-width="1.2" fill="none"/><path d="M4.5 13 L8.5 9" stroke="#000" stroke-width="1.6"/><rect x="7" y="8" width="3" height="2" fill="#000"/><rect x="5" y="8" width="1" height="1" fill="#000"/><rect x="11" y="8" width="1" height="2" fill="#000"/><path d="M12.5 10 V14" stroke="#a0a0a0"/></svg>
<div class="t" style="left:250px;top:1004px;font-size:13px;line-height:15px;font-weight:700;color:#000;letter-spacing:0.750px;font-family:'Liberation Sans';">HP VEE - iic_test....</div>
<div class="a" style="left:391px;top:1000px;width:160px;height:22px;background:#c0c0c0;box-shadow:inset 1px 1px #fff,inset -1px -1px #000,inset -2px -2px #808080;"></div>
<svg class="a" style="left:395px;top:1002px" width="14" height="18" viewBox="0 0 14 18" shape-rendering="crispEdges"><rect x="0" y="3" width="12" height="13" fill="#fff"/><rect x="0" y="3" width="1" height="13" fill="#808080"/><rect x="12" y="3" width="1" height="13" fill="#000"/><rect x="1" y="16" width="11" height="1" fill="#000"/><path d="M2 1.5h1M4 1.5h1M6 1.5h1M8 1.5h1M10 1.5h1M1 2.5h1M11 2.5h1M2 3.5h1M4 3.5h1M6 3.5h1M8 3.5h1M10 3.5h1" stroke="#000"/><path d="M3 6.5h3M7 6.5h2M3 8.5h6M3 10.5h6M3 12.5h6" stroke="#000"/></svg>
<div class="t" style="left:413px;top:1004px;font-size:12px;line-height:14px;font-weight:400;color:#000;letter-spacing:0.947px;font-family:'Liberation Sans';">Veeppapi.h - Notepad</div>
<div class="a" style="left:554px;top:1000px;width:160px;height:22px;background:#c0c0c0;box-shadow:inset 1px 1px #fff,inset -1px -1px #000,inset -2px -2px #808080;"></div>
<svg class="a" style="left:554px;top:1000px" width="24" height="22" viewBox="0 0 24 22"><path d="M9.5 3.5 H11 L12 4.5 V11 L11 12 M9.5 3.5 V11" stroke="#f00" fill="none" stroke-width="1.2"/><path d="M11 11.5 H19 L20 12.5 V13.5 H15 L11 13.5" stroke="#f00" fill="none" stroke-width="1.2"/><path d="M10.5 12 L5 17.5 L4.5 19 H6 L11.5 13.5" stroke="#f00" fill="none" stroke-width="1.2"/><path d="M8.5 6.5h1M13.5 6.5h1M6.5 9.5h1M16.5 8.5h1M6.5 12.5h1M16.5 14.5h1M9.5 16.5h1M13.5 16.5h1" stroke="#808000"/></svg>
<div class="t" style="left:576px;top:1004px;font-size:12px;line-height:14px;font-weight:400;color:#000;letter-spacing:0.619px;font-family:'Liberation Sans';">Acrobat Reader - [R...</div>
<div class="a" style="left:1209px;top:1000px;width:69px;height:22px;background:#c0c0c0;box-shadow:inset 1px 1px #808080,inset -1px -1px #fff;"></div>
<svg class="a" style="left:1210px;top:1001px" width="20" height="20" viewBox="0 0 20 20"><path d="M2.5 9 L4 8 L5 8 L11 2.5 V18.5 L5 13 L2.5 12 Z" fill="#ff0" stroke="#000"/><path d="M12 3.5 V17.5 H14 V3.5 Z" fill="#fff"/><path d="M14.5 6 V16" stroke="#808080"/><path d="M10.5 7 V14" stroke="#000" stroke-width="1.2"/><path d="M16 8 L18 6 M16 11.5 H19 M16 14 L18 16" stroke="#808080"/></svg>
<div class="t" style="left:1237px;top:1005px;font-size:12px;line-height:14px;font-weight:400;color:#000;letter-spacing:0.750px;font-family:'Liberation Sans';">11:16</div>
<svg class="a" style="left:9px;top:75px" width="12" height="14" viewBox="0 0 12 14" shape-rendering="crispEdges"><path d="M0.5 0.5 H8 L11.5 4 V13.5 H0.5 Z" fill="#fff" stroke="#000"/><rect x="2" y="3" width="3" height="1.5" fill="#0c0"/><rect x="6" y="3" width="4" height="2" fill="#00f"/><rect x="8" y="7" width="2" height="4" fill="#f0f"/><path d="M2 11 L6 7 M3.5 7 H6 V9.5" stroke="#000" stroke-width="1.4" fill="none"/></svg>
<div class="t" style="left:30px;top:77px;font-size:12px;line-height:14px;font-weight:700;color:#000;letter-spacing:-0.35px;">iic_test.vee</div>
<div class="a" style="left:15px;top:90px;width:1px;height:695px;background:#808080;"></div>
<div class="a" style="left:16px;top:101px;width:11px;height:1px;background:#808080;"></div>
<svg class="a" style="left:28px;top:94px" width="12" height="14" viewBox="0 0 12 14" shape-rendering="crispEdges"><path d="M0.5 0.5 H8 L11.5 4 V13.5 H0.5 Z" fill="#fff" stroke="#000"/><rect x="2.5" y="3.5" width="4" height="3" fill="#ff0" stroke="#000"/><rect x="2" y="3" width="5" height="1" fill="#00f"/><rect x="5.5" y="8.5" width="5" height="3" fill="#ff0" stroke="#000"/><rect x="5" y="8" width="6" height="1" fill="#00f"/></svg>
<div class="t" style="left:48px;top:95px;font-size:12px;line-height:14px;font-weight:400;color:#000;letter-spacing:0.2px;">Main</div>
<div class="a" style="left:19px;top:120px;width:8px;height:1px;background:#808080;"></div>
<svg class="a" style="left:27px;top:113px" width="15" height="13" viewBox="0 0 15 13" shape-rendering="crispEdges"><use href="#fold"/></svg>
<div class="a" style="left:11px;top:116px;width:9px;height:9px;background:#fff;box-shadow:inset 0 0 0 1px #808080;"></div>
<div class="a" style="left:13px;top:120px;width:5px;height:1px;background:#000;"></div>
<div class="a" style="left:15px;top:118px;width:1px;height:5px;background:#000;"></div>
<div class="t" style="left:48px;top:114px;font-size:12px;line-height:14px;font-weight:400;color:#000;letter-spacing:0.17px;">Local User Functions</div>
<div class="a" style="left:19px;top:139px;width:8px;height:1px;background:#808080;"></div>
<svg class="a" style="left:27px;top:132px" width="15" height="13" viewBox="0 0 15 13" shape-rendering="crispEdges"><use href="#fold"/></svg>
<div class="a" style="left:11px;top:135px;width:9px;height:9px;background:#fff;box-shadow:inset 0 0 0 1px #808080;"></div>
<div class="a" style="left:13px;top:139px;width:5px;height:1px;background:#000;"></div>
<div class="t" style="left:48px;top:133px;font-size:12px;line-height:14px;font-weight:400;color:#000;letter-spacing:0.17px;">Compiled Functions</div>
<div class="a" style="left:19px;top:785px;width:8px;height:1px;background:#808080;"></div>
<svg class="a" style="left:27px;top:778px" width="15" height="13" viewBox="0 0 15 13" shape-rendering="crispEdges"><use href="#fold"/></svg>
<div class="a" style="left:11px;top:781px;width:9px;height:9px;background:#fff;box-shadow:inset 0 0 0 1px #808080;"></div>
<div class="a" style="left:13px;top:785px;width:5px;height:1px;background:#000;"></div>
<div class="a" style="left:15px;top:783px;width:1px;height:5px;background:#000;"></div>
<div class="t" style="left:48px;top:779px;font-size:12px;line-height:14px;font-weight:400;color:#000;letter-spacing:0.17px;">Globals</div>
<div class="a" style="left:34px;top:147px;width:1px;height:7px;background:#808080;"></div>
<div class="a" style="left:30px;top:154px;width:9px;height:9px;background:#fff;box-shadow:inset 0 0 0 1px #808080;"></div>
<div class="a" style="left:32px;top:158px;width:5px;height:1px;background:#000;"></div>
<div class="a" style="left:39px;top:158px;width:7px;height:1px;background:#808080;"></div>
<svg class="a" style="left:46px;top:151px" width="15" height="13" viewBox="0 0 15 13" shape-rendering="crispEdges"><use href="#fold"/></svg>
<div class="t" style="left:67px;top:152px;font-size:12px;line-height:14px;font-weight:400;color:#000;letter-spacing:0.17px;">I2CviaLP</div>
<div class="a" style="left:53px;top:167px;width:1px;height:600px;background:#808080;"></div>
<div class="a" style="left:7px;top:73px;width:174px;height:879px;overflow:hidden">
<div class="a" style="left:47px;top:104px;width:10px;height:1px;background:#808080"></div>
<div class="t" style="left:79px;top:98px;font-size:12px;line-height:14px;letter-spacing:0.17px">I2cAbout</div>
<div class="a" style="left:47px;top:123px;width:10px;height:1px;background:#808080"></div>
<div class="t" style="left:79px;top:117px;font-size:12px;line-height:14px;letter-spacing:0.17px">I2cClose</div>
<div class="a" style="left:47px;top:142px;width:10px;height:1px;background:#808080"></div>
<div class="t" style="left:79px;top:136px;font-size:12px;line-height:14px;letter-spacing:0.17px">I2cGetBitrate</div>
<div class="a" style="left:47px;top:161px;width:10px;height:1px;background:#808080"></div>
<div class="t" style="left:79px;top:155px;font-size:12px;line-height:14px;letter-spacing:0.17px">I2cGetDeviceAddr</div>
<div class="a" style="left:47px;top:180px;width:10px;height:1px;background:#808080"></div>
<div class="t" style="left:79px;top:174px;font-size:12px;line-height:14px;letter-spacing:0.17px">I2cGetErrorMessa</div>
<div class="a" style="left:47px;top:199px;width:10px;height:1px;background:#808080"></div>
<div class="t" style="left:79px;top:193px;font-size:12px;line-height:14px;letter-spacing:0.17px">I2cGetErrorNumb</div>
<div class="a" style="left:47px;top:218px;width:10px;height:1px;background:#808080"></div>
<div class="t" style="left:79px;top:212px;font-size:12px;line-height:14px;letter-spacing:0.17px">I2cGetInterfaceTy</div>
<div class="a" style="left:47px;top:237px;width:10px;height:1px;background:#808080"></div>
<div class="t" style="left:79px;top:231px;font-size:12px;line-height:14px;letter-spacing:0.17px">I2cGetInterfaceTy</div>
<div class="a" style="left:47px;top:256px;width:10px;height:1px;background:#808080"></div>
<div class="t" style="left:79px;top:250px;font-size:12px;line-height:14px;letter-spacing:0.17px">I2cGetInterfaceTy</div>
<div class="a" style="left:47px;top:275px;width:10px;height:1px;background:#808080"></div>
<div class="t" style="left:79px;top:269px;font-size:12px;line-height:14px;letter-spacing:0.17px">I2cGetIOAddress</div>
<div class="a" style="left:47px;top:294px;width:10px;height:1px;background:#808080"></div>
<div class="t" style="left:79px;top:288px;font-size:12px;line-height:14px;letter-spacing:0.17px">I2cGetNextInterfa</div>
<div class="a" style="left:47px;top:313px;width:10px;height:1px;background:#808080"></div>
<div class="t" style="left:79px;top:307px;font-size:12px;line-height:14px;letter-spacing:0.17px">I2cGetNumberOfP</div>
<div class="a" style="left:47px;top:332px;width:10px;height:1px;background:#808080"></div>
<div class="t" style="left:79px;top:326px;font-size:12px;line-height:14px;letter-spacing:0.17px">I2cGetPrinterPort</div>
<div class="a" style="left:47px;top:351px;width:10px;height:1px;background:#808080"></div>
<div class="t" style="left:79px;top:345px;font-size:12px;line-height:14px;letter-spacing:0.17px">I2cGetTimeout</div>
<div class="a" style="left:47px;top:370px;width:10px;height:1px;background:#808080"></div>
<div class="t" style="left:79px;top:364px;font-size:12px;line-height:14px;letter-spacing:0.17px">I2cGetVersion</div>
<div class="a" style="left:47px;top:389px;width:10px;height:1px;background:#808080"></div>
<div class="t" style="left:79px;top:383px;font-size:12px;line-height:14px;letter-spacing:0.17px">I2cGetVersionStri</div>
<div class="a" style="left:47px;top:408px;width:10px;height:1px;background:#808080"></div>
<div class="t" style="left:79px;top:402px;font-size:12px;line-height:14px;letter-spacing:0.17px">I2cOpen</div>
<div class="a" style="left:47px;top:427px;width:10px;height:1px;background:#808080"></div>
<div class="t" style="left:79px;top:421px;font-size:12px;line-height:14px;letter-spacing:0.17px">I2cRead</div>
<div class="a" style="left:47px;top:446px;width:10px;height:1px;background:#808080"></div>
<div class="t" style="left:79px;top:440px;font-size:12px;line-height:14px;letter-spacing:0.17px">I2cReadAfterRest</div>
<div class="a" style="left:47px;top:465px;width:10px;height:1px;background:#808080"></div>
<div class="t" style="left:79px;top:459px;font-size:12px;line-height:14px;letter-spacing:0.17px">I2cSetBitrate</div>
<div class="a" style="left:47px;top:484px;width:10px;height:1px;background:#808080"></div>
<div class="t" style="left:79px;top:478px;font-size:12px;line-height:14px;letter-spacing:0.17px">I2cSetDeviceAddr</div>
<div class="a" style="left:47px;top:503px;width:10px;height:1px;background:#808080"></div>
<div class="t" style="left:79px;top:497px;font-size:12px;line-height:14px;letter-spacing:0.17px">I2cSetInterfaceTyp</div>
<div class="a" style="left:47px;top:522px;width:10px;height:1px;background:#808080"></div>
<div class="t" style="left:79px;top:516px;font-size:12px;line-height:14px;letter-spacing:0.17px">I2cSetIOAddress</div>
<div class="a" style="left:47px;top:541px;width:10px;height:1px;background:#808080"></div>
<div class="t" style="left:79px;top:535px;font-size:12px;line-height:14px;letter-spacing:0.17px">I2cSetPrinterPort</div>
<div class="a" style="left:47px;top:560px;width:10px;height:1px;background:#808080"></div>
<div class="t" style="left:79px;top:554px;font-size:12px;line-height:14px;letter-spacing:0.17px">I2cSetTimeout</div>
<div class="a" style="left:47px;top:579px;width:10px;height:1px;background:#808080"></div>
<div class="t" style="left:79px;top:573px;font-size:12px;line-height:14px;letter-spacing:0.17px">I2cSettingsAreVal</div>
<div class="a" style="left:47px;top:598px;width:10px;height:1px;background:#808080"></div>
<div class="t" style="left:79px;top:592px;font-size:12px;line-height:14px;letter-spacing:0.17px">I2cSwitchTraceOf</div>
<div class="a" style="left:47px;top:617px;width:10px;height:1px;background:#808080"></div>
<div class="t" style="left:79px;top:611px;font-size:12px;line-height:14px;letter-spacing:0.17px">I2cSwitchTraceOn</div>
<div class="a" style="left:47px;top:636px;width:10px;height:1px;background:#808080"></div>
<div class="t" style="left:79px;top:630px;font-size:12px;line-height:14px;letter-spacing:0.17px">I2cTracePrint</div>
<div class="a" style="left:47px;top:655px;width:10px;height:1px;background:#808080"></div>
<div class="t" style="left:79px;top:649px;font-size:12px;line-height:14px;letter-spacing:0.17px">I2cTraceTime</div>
<div class="a" style="left:47px;top:674px;width:10px;height:1px;background:#808080"></div>
<div class="t" style="left:79px;top:668px;font-size:12px;line-height:14px;letter-spacing:0.17px">I2cWrite</div>
<div class="a" style="left:47px;top:693px;width:10px;height:1px;background:#808080"></div>
<div class="t" style="left:79px;top:687px;font-size:12px;line-height:14px;letter-spacing:0.17px">I2cWriteAfterRest</div>
</div>
<svg class="a" style="left:64px;top:170px" width="16" height="14" viewBox="0 0 16 14" shape-rendering="crispEdges"><use href="#fx"/></svg>
<svg class="a" style="left:64px;top:189px" width="16" height="14" viewBox="0 0 16 14" shape-rendering="crispEdges"><use href="#fx"/></svg>
<svg class="a" style="left:64px;top:208px" width="16" height="14" viewBox="0 0 16 14" shape-rendering="crispEdges"><use href="#fx"/></svg>
<svg class="a" style="left:64px;top:227px" width="16" height="14" viewBox="0 0 16 14" shape-rendering="crispEdges"><use href="#fx"/></svg>
<svg class="a" style="left:64px;top:246px" width="16" height="14" viewBox="0 0 16 14" shape-rendering="crispEdges"><use href="#fx"/></svg>
<svg class="a" style="left:64px;top:265px" width="16" height="14" viewBox="0 0 16 14" shape-rendering="crispEdges"><use href="#fx"/></svg>
<svg class="a" style="left:64px;top:284px" width="16" height="14" viewBox="0 0 16 14" shape-rendering="crispEdges"><use href="#fx"/></svg>
<svg class="a" style="left:64px;top:303px" width="16" height="14" viewBox="0 0 16 14" shape-rendering="crispEdges"><use href="#fx"/></svg>
<svg class="a" style="left:64px;top:322px" width="16" height="14" viewBox="0 0 16 14" shape-rendering="crispEdges"><use href="#fx"/></svg>
<svg class="a" style="left:64px;top:341px" width="16" height="14" viewBox="0 0 16 14" shape-rendering="crispEdges"><use href="#fx"/></svg>
<svg class="a" style="left:64px;top:360px" width="16" height="14" viewBox="0 0 16 14" shape-rendering="crispEdges"><use href="#fx"/></svg>
<svg class="a" style="left:64px;top:379px" width="16" height="14" viewBox="0 0 16 14" shape-rendering="crispEdges"><use href="#fx"/></svg>
<svg class="a" style="left:64px;top:398px" width="16" height="14" viewBox="0 0 16 14" shape-rendering="crispEdges"><use href="#fx"/></svg>
<svg class="a" style="left:64px;top:417px" width="16" height="14" viewBox="0 0 16 14" shape-rendering="crispEdges"><use href="#fx"/></svg>
<svg class="a" style="left:64px;top:436px" width="16" height="14" viewBox="0 0 16 14" shape-rendering="crispEdges"><use href="#fx"/></svg>
<svg class="a" style="left:64px;top:455px" width="16" height="14" viewBox="0 0 16 14" shape-rendering="crispEdges"><use href="#fx"/></svg>
<svg class="a" style="left:64px;top:474px" width="16" height="14" viewBox="0 0 16 14" shape-rendering="crispEdges"><use href="#fx"/></svg>
<svg class="a" style="left:64px;top:493px" width="16" height="14" viewBox="0 0 16 14" shape-rendering="crispEdges"><use href="#fx"/></svg>
<svg class="a" style="left:64px;top:512px" width="16" height="14" viewBox="0 0 16 14" shape-rendering="crispEdges"><use href="#fx"/></svg>
<svg class="a" style="left:64px;top:531px" width="16" height="14" viewBox="0 0 16 14" shape-rendering="crispEdges"><use href="#fx"/></svg>
<svg class="a" style="left:64px;top:550px" width="16" height="14" viewBox="0 0 16 14" shape-rendering="crispEdges"><use href="#fx"/></svg>
<svg class="a" style="left:64px;top:569px" width="16" height="14" viewBox="0 0 16 14" shape-rendering="crispEdges"><use href="#fx"/></svg>
<svg class="a" style="left:64px;top:588px" width="16" height="14" viewBox="0 0 16 14" shape-rendering="crispEdges"><use href="#fx"/></svg>
<svg class="a" style="left:64px;top:607px" width="16" height="14" viewBox="0 0 16 14" shape-rendering="crispEdges"><use href="#fx"/></svg>
<svg class="a" style="left:64px;top:626px" width="16" height="14" viewBox="0 0 16 14" shape-rendering="crispEdges"><use href="#fx"/></svg>
<svg class="a" style="left:64px;top:645px" width="16" height="14" viewBox="0 0 16 14" shape-rendering="crispEdges"><use href="#fx"/></svg>
<svg class="a" style="left:64px;top:664px" width="16" height="14" viewBox="0 0 16 14" shape-rendering="crispEdges"><use href="#fx"/></svg>
<svg class="a" style="left:64px;top:683px" width="16" height="14" viewBox="0 0 16 14" shape-rendering="crispEdges"><use href="#fx"/></svg>
<svg class="a" style="left:64px;top:702px" width="16" height="14" viewBox="0 0 16 14" shape-rendering="crispEdges"><use href="#fx"/></svg>
<svg class="a" style="left:64px;top:721px" width="16" height="14" viewBox="0 0 16 14" shape-rendering="crispEdges"><use href="#fx"/></svg>
<svg class="a" style="left:64px;top:740px" width="16" height="14" viewBox="0 0 16 14" shape-rendering="crispEdges"><use href="#fx"/></svg>
<svg class="a" style="left:64px;top:759px" width="16" height="14" viewBox="0 0 16 14" shape-rendering="crispEdges"><use href="#fx"/></svg>
<svg class="a" style="left:0;top:0" width="1280" height="1024" viewBox="0 0 1280 1024"><path d="M635.5 146 V158 M635.5 178 V202 M635.5 276 V312 M635.5 386 V430 M635.5 486 V502 M635.5 614 V688" stroke="#c0c0c0" stroke-width="1" fill="none"/><path d="M635.5 707 V725 L637.5 727.5 H913 L915.5 730 V745" stroke="#c0c0c0" stroke-width="1" fill="none"/><path d="M755 247.5 H829" stroke="#000" stroke-width="1" fill="none"/><path d="M507 568 H558" stroke="#0000ff" stroke-width="2" fill="none"/><path d="M713 568 H849" stroke="#0000ff" stroke-width="2" fill="none"/><path d="M736 569 V814 L739 818 H760" stroke="#0000ff" stroke-width="2" fill="none"/><path d="M670 697.5 H692 L695.5 701 V774 L698.5 777.5 H760" stroke="#000" stroke-width="1" fill="none"/><path d="M657 797.5 H760" stroke="#0000ff" stroke-width="1" fill="none"/><path d="M1070 777.5 H1092 L1095.5 774 V711 L1098.5 707.5 H1124" stroke="#000" stroke-width="1" fill="none"/><path d="M1070 817.5 H1092 L1095.5 821 V824 L1098.5 827.5 H1125" stroke="#000" stroke-width="1" fill="none"/></svg>
<div class="a" style="left:615px;top:119px;width:54px;height:28px;background:#808080;"></div>
<div class="a" style="left:611px;top:115px;width:51px;height:26px;background:#808080;"></div>
<div class="a" style="left:612px;top:116px;width:49px;height:24px;background:#fff;"></div>
<div class="a" style="left:613px;top:117px;width:46px;height:21px;background:#000;"></div>
<div class="a" style="left:613px;top:117px;width:45px;height:20px;background:#c0c0c0;"></div>
<div class="a" style="left:609px;top:140px;width:2px;height:1px;background:#808080;"></div>
<div class="a" style="left:615px;top:119px;width:39px;height:14px;border:1px dotted #000"></div>
<div class="t" style="left:622px;top:120px;font-size:12px;line-height:14px;font-weight:400;color:#000;letter-spacing:0.250px;font-family:'Liberation Sans';">Start</div>
<div class="a" style="left:632px;top:138px;width:7px;height:3px;background:#000;"></div>
<svg class="a" style="left:588px;top:154px" width="94" height="26" viewBox="0 0 94 26"><path d="M88 6 L91 3 V24 H3 L6 21 H88 Z" fill="#008080"/></svg>
<div class="a" style="left:594px;top:160px;width:82px;height:15px;background:#c0c0c0;"></div>
<div class="t" style="left:597px;top:162px;font-size:12px;line-height:14px;font-weight:400;color:#000;letter-spacing:0.154px;font-family:'Liberation Sans';">Import Library</div>
<div class="a" style="left:632px;top:157px;width:7px;height:3px;background:#000;"></div>
<div class="a" style="left:632px;top:175px;width:7px;height:3px;background:#000;"></div>
<div class="a" style="left:516px;top:203px;width:240px;height:73px;background:#808080;"></div>
<div class="a" style="left:517px;top:204px;width:237px;height:70px;background:#fff;"></div>
<div class="a" style="left:518px;top:205px;width:235px;height:16px;background:#c0c0c0;"></div>
<div class="a" style="left:517px;top:221px;width:236px;height:1px;background:#008080;"></div>
<div class="a" style="left:752px;top:205px;width:1px;height:17px;background:#008080;"></div>
<div class="a" style="left:534px;top:205px;width:1px;height:17px;background:#008080;"></div>
<div class="a" style="left:535px;top:205px;width:1px;height:16px;background:#fff;"></div>
<div class="a" style="left:521px;top:211px;width:10px;height:1px;background:#fff;"></div>
<div class="a" style="left:521px;top:212px;width:9px;height:1px;background:#fff;"></div>
<div class="a" style="left:530px;top:212px;width:1px;height:1px;background:#008080;"></div>
<div class="a" style="left:521px;top:213px;width:1px;height:1px;background:#fff;"></div>
<div class="a" style="left:522px;top:213px;width:9px;height:1px;background:#008080;"></div>
<div class="a" style="left:521px;top:214px;width:10px;height:1px;background:#008080;"></div>
<div class="a" style="left:734px;top:205px;width:1px;height:17px;background:#008080;"></div>
<div class="a" style="left:735px;top:205px;width:1px;height:16px;background:#fff;"></div>
<div class="a" style="left:741px;top:210px;width:6px;height:6px;background:#008080;"></div>
<div class="a" style="left:741px;top:210px;width:6px;height:1px;background:#fff;"></div>
<div class="a" style="left:741px;top:211px;width:5px;height:1px;background:#fff;"></div>
<div class="a" style="left:741px;top:212px;width:2px;height:2px;background:#fff;"></div>
<div class="a" style="left:741px;top:214px;width:1px;height:1px;background:#fff;"></div>
<div class="a" style="left:743px;top:212px;width:2px;height:1px;background:#c0c0c0;"></div>
<div class="a" style="left:743px;top:213px;width:1px;height:1px;background:#c0c0c0;"></div>
<div class="a" style="left:517px;top:222px;width:236px;height:1px;background:#808080;"></div>
<div class="a" style="left:517px;top:222px;width:1px;height:51px;background:#808080;"></div>
<div class="a" style="left:518px;top:223px;width:235px;height:50px;background:#c0c0c0;"></div>
<div class="a" style="left:515px;top:274px;width:1px;height:2px;background:#808080;"></div>
<div class="a" style="left:514px;top:275px;width:1px;height:1px;background:#808080;"></div>
<div class="t" style="left:568px;top:206px;font-size:12px;line-height:14px;font-weight:400;color:#000;letter-spacing:0.095px;font-family:'Liberation Sans';">Call Get_InterfaceGUID</div>
<div class="a" style="left:546px;top:222px;width:178px;height:51px;background:#808080;"></div>
<div class="a" style="left:546px;top:222px;width:177px;height:50px;background:#fff;"></div>
<div class="a" style="left:547px;top:223px;width:176px;height:49px;background:#c0c0c0;"></div>
<div class="t" style="left:588px;top:229px;font-size:12px;line-height:14px;font-weight:400;color:#000;letter-spacing:0.333px;font-family:'Liberation Sans';">Function Name</div>
<div class="a" style="left:553px;top:249px;width:165px;height:19px;background:#fff;"></div>
<div class="a" style="left:553px;top:249px;width:164px;height:18px;background:#808080;"></div>
<div class="a" style="left:554px;top:250px;width:163px;height:17px;background:#000;"></div>
<div class="a" style="left:555px;top:251px;width:161px;height:15px;background:#fff;"></div>
<div class="a" style="left:554px;top:266px;width:163px;height:1px;background:#dfdfdf;"></div>
<div class="a" style="left:716px;top:250px;width:1px;height:17px;background:#dfdfdf;"></div>
<div class="t" style="left:583px;top:251px;font-size:12px;line-height:14px;font-weight:400;color:#000;letter-spacing:0.062px;font-family:'Liberation Sans';">Get_InterfaceGUID</div>
<div class="a" style="left:632px;top:201px;width:7px;height:3px;background:#000;"></div>
<div class="a" style="left:632px;top:273px;width:7px;height:3px;background:#000;"></div>
<div class="a" style="left:724px;top:238px;width:28px;height:19px;background:#808080;"></div>
<div class="a" style="left:724px;top:238px;width:27px;height:18px;background:#fff;"></div>
<div class="a" style="left:725px;top:239px;width:26px;height:17px;background:#c0c0c0;"></div>
<div class="t" style="left:733px;top:240px;font-size:12px;line-height:14px;font-weight:400;color:#000;letter-spacing:0.000px;font-family:'Liberation Sans';">X</div>
<div class="a" style="left:753px;top:244px;width:3px;height:7px;background:#000;"></div>
<div class="a" style="left:516px;top:313px;width:240px;height:73px;background:#808080;"></div>
<div class="a" style="left:517px;top:314px;width:237px;height:70px;background:#fff;"></div>
<div class="a" style="left:518px;top:315px;width:235px;height:16px;background:#c0c0c0;"></div>
<div class="a" style="left:517px;top:331px;width:236px;height:1px;background:#008080;"></div>
<div class="a" style="left:752px;top:315px;width:1px;height:17px;background:#008080;"></div>
<div class="a" style="left:534px;top:315px;width:1px;height:17px;background:#008080;"></div>
<div class="a" style="left:535px;top:315px;width:1px;height:16px;background:#fff;"></div>
<div class="a" style="left:521px;top:321px;width:10px;height:1px;background:#fff;"></div>
<div class="a" style="left:521px;top:322px;width:9px;height:1px;background:#fff;"></div>
<div class="a" style="left:530px;top:322px;width:1px;height:1px;background:#008080;"></div>
<div class="a" style="left:521px;top:323px;width:1px;height:1px;background:#fff;"></div>
<div class="a" style="left:522px;top:323px;width:9px;height:1px;background:#008080;"></div>
<div class="a" style="left:521px;top:324px;width:10px;height:1px;background:#008080;"></div>
<div class="a" style="left:734px;top:315px;width:1px;height:17px;background:#008080;"></div>
<div class="a" style="left:735px;top:315px;width:1px;height:16px;background:#fff;"></div>
<div class="a" style="left:741px;top:320px;width:6px;height:6px;background:#008080;"></div>
<div class="a" style="left:741px;top:320px;width:6px;height:1px;background:#fff;"></div>
<div class="a" style="left:741px;top:321px;width:5px;height:1px;background:#fff;"></div>
<div class="a" style="left:741px;top:322px;width:2px;height:2px;background:#fff;"></div>
<div class="a" style="left:741px;top:324px;width:1px;height:1px;background:#fff;"></div>
<div class="a" style="left:743px;top:322px;width:2px;height:1px;background:#c0c0c0;"></div>
<div class="a" style="left:743px;top:323px;width:1px;height:1px;background:#c0c0c0;"></div>
<div class="a" style="left:517px;top:332px;width:236px;height:1px;background:#808080;"></div>
<div class="a" style="left:517px;top:332px;width:1px;height:51px;background:#808080;"></div>
<div class="a" style="left:518px;top:333px;width:235px;height:50px;background:#c0c0c0;"></div>
<div class="a" style="left:515px;top:384px;width:1px;height:2px;background:#808080;"></div>
<div class="a" style="left:514px;top:385px;width:1px;height:1px;background:#808080;"></div>
<div class="t" style="left:573px;top:316px;font-size:12px;line-height:14px;font-weight:400;color:#000;letter-spacing:0.158px;font-family:'Liberation Sans';">Call OpenAndInit_I2C</div>
<div class="a" style="left:546px;top:332px;width:178px;height:51px;background:#808080;"></div>
<div class="a" style="left:546px;top:332px;width:177px;height:50px;background:#fff;"></div>
<div class="a" style="left:547px;top:333px;width:176px;height:49px;background:#c0c0c0;"></div>
<div class="t" style="left:588px;top:339px;font-size:12px;line-height:14px;font-weight:400;color:#000;letter-spacing:0.333px;font-family:'Liberation Sans';">Function Name</div>
<div class="a" style="left:553px;top:359px;width:165px;height:19px;background:#fff;"></div>
<div class="a" style="left:553px;top:359px;width:164px;height:18px;background:#808080;"></div>
<div class="a" style="left:554px;top:360px;width:163px;height:17px;background:#000;"></div>
<div class="a" style="left:555px;top:361px;width:161px;height:15px;background:#fff;"></div>
<div class="a" style="left:554px;top:376px;width:163px;height:1px;background:#dfdfdf;"></div>
<div class="a" style="left:716px;top:360px;width:1px;height:17px;background:#dfdfdf;"></div>
<div class="t" style="left:588px;top:361px;font-size:12px;line-height:14px;font-weight:400;color:#000;letter-spacing:0.143px;font-family:'Liberation Sans';">OpenAndInit_I2C</div>
<div class="a" style="left:632px;top:311px;width:7px;height:3px;background:#000;"></div>
<div class="a" style="left:632px;top:383px;width:7px;height:3px;background:#000;"></div>
<div class="a" style="left:830px;top:219px;width:353px;height:41px;background:#808080;"></div>
<div class="a" style="left:831px;top:220px;width:350px;height:38px;background:#fff;"></div>
<div class="a" style="left:832px;top:221px;width:348px;height:16px;background:#c0c0c0;"></div>
<div class="a" style="left:831px;top:237px;width:349px;height:1px;background:#008080;"></div>
<div class="a" style="left:1179px;top:221px;width:1px;height:17px;background:#008080;"></div>
<div class="a" style="left:848px;top:221px;width:1px;height:17px;background:#008080;"></div>
<div class="a" style="left:849px;top:221px;width:1px;height:16px;background:#fff;"></div>
<div class="a" style="left:835px;top:227px;width:10px;height:1px;background:#fff;"></div>
<div class="a" style="left:835px;top:228px;width:9px;height:1px;background:#fff;"></div>
<div class="a" style="left:844px;top:228px;width:1px;height:1px;background:#008080;"></div>
<div class="a" style="left:835px;top:229px;width:1px;height:1px;background:#fff;"></div>
<div class="a" style="left:836px;top:229px;width:9px;height:1px;background:#008080;"></div>
<div class="a" style="left:835px;top:230px;width:10px;height:1px;background:#008080;"></div>
<div class="a" style="left:1161px;top:221px;width:1px;height:17px;background:#008080;"></div>
<div class="a" style="left:1162px;top:221px;width:1px;height:16px;background:#fff;"></div>
<div class="a" style="left:1168px;top:226px;width:6px;height:6px;background:#008080;"></div>
<div class="a" style="left:1168px;top:226px;width:6px;height:1px;background:#fff;"></div>
<div class="a" style="left:1168px;top:227px;width:5px;height:1px;background:#fff;"></div>
<div class="a" style="left:1168px;top:228px;width:2px;height:2px;background:#fff;"></div>
<div class="a" style="left:1168px;top:230px;width:1px;height:1px;background:#fff;"></div>
<div class="a" style="left:1170px;top:228px;width:2px;height:1px;background:#c0c0c0;"></div>
<div class="a" style="left:1170px;top:229px;width:1px;height:1px;background:#c0c0c0;"></div>
<div class="a" style="left:832px;top:239px;width:348px;height:18px;background:#c0c0c0;"></div>
<div class="a" style="left:1179px;top:238px;width:1px;height:19px;background:#808080;"></div>
<div class="a" style="left:832px;top:256px;width:348px;height:1px;background:#808080;"></div>
<div class="a" style="left:829px;top:258px;width:1px;height:2px;background:#808080;"></div>
<div class="a" style="left:828px;top:259px;width:1px;height:1px;background:#808080;"></div>
<div class="t" style="left:966px;top:222px;font-size:12px;line-height:14px;font-weight:400;color:#000;letter-spacing:0.273px;font-family:'Liberation Sans';">AlphaNumeric</div>
<div class="t" style="left:855px;top:239px;font-size:14px;line-height:16px;font-weight:400;color:#000;letter-spacing:0.189px;font-family:'Liberation Sans';">{9C6B80A1-61ED-11d2-A07C-0000F68A2A09}</div>
<div class="a" style="left:828px;top:244px;width:3px;height:7px;background:#000;"></div>
<div class="a" style="left:1002px;top:217px;width:7px;height:3px;background:#000;"></div>
<div class="a" style="left:1002px;top:257px;width:7px;height:3px;background:#000;"></div>
<svg class="a" style="left:566px;top:426px" width="140" height="62" viewBox="0 0 140 62"><path d="M133 6 L136 3 V60 H3 L6 57 H133 Z" fill="#008080"/></svg>
<div class="a" style="left:572px;top:432px;width:127px;height:35px;background:#008080;"></div>
<div class="a" style="left:573px;top:433px;width:125px;height:33px;background:#fff;"></div>
<div class="a" style="left:574px;top:434px;width:123px;height:31px;background:#c0c0c0;"></div>
<div class="a" style="left:572px;top:468px;width:126px;height:15px;background:#c0c0c0;"></div>
<svg class="a" style="left:607px;top:434px" width="56" height="32" viewBox="0 0 56 32"><rect x="0.75" y="0.75" width="54.5" height="30.5" fill="#c0c0c0" stroke="#000" stroke-width="1.5"/><path d="M2 2.5 H54" stroke="#fff"/><rect x="2.5" y="4.5" width="25" height="25" fill="#c0c0c0" stroke="#000"/><path d="M3 25.5 H27" stroke="#000"/><rect x="3.5" y="26.5" width="6" height="2" fill="#dfdfdf" stroke="#000"/><rect x="11.5" y="26.5" width="2" height="2" fill="#dfdfdf" stroke="#000"/><rect x="16.5" y="26.5" width="2" height="2" fill="#dfdfdf" stroke="#000"/><rect x="20.5" y="26.5" width="6" height="2" fill="#dfdfdf" stroke="#000"/><rect x="29.5" y="4.5" width="25" height="25" fill="#c0c0c0" stroke="#000"/><rect x="30.5" y="5.5" width="6" height="3" fill="#dfdfdf" stroke="#000"/><rect x="38.5" y="5.5" width="15" height="3" fill="#dfdfdf" stroke="#000"/><rect x="30.5" y="10.5" width="8" height="3" fill="#dfdfdf" stroke="#000"/><rect x="41.5" y="10.5" width="12" height="3" fill="#dfdfdf" stroke="#000"/><rect x="30.5" y="14.5" width="8" height="3" fill="#dfdfdf" stroke="#000"/><rect x="41.5" y="14.5" width="12" height="3" fill="#dfdfdf" stroke="#000"/><rect x="30" y="18" width="24" height="11" fill="url(#chkK)"/></svg>
<div class="t" style="left:577px;top:469px;font-size:12px;line-height:14px;font-weight:400;color:#000;letter-spacing:0.312px;font-family:'Liberation Sans';">HP6624A_1 ( @705)</div>
<div class="a" style="left:632px;top:429px;width:7px;height:3px;background:#000;"></div>
<div class="a" style="left:632px;top:483px;width:7px;height:3px;background:#000;"></div>
<div class="a" style="left:244px;top:492px;width:264px;height:135px;background:#808080;"></div>
<div class="a" style="left:245px;top:493px;width:261px;height:132px;background:#fff;"></div>
<div class="a" style="left:246px;top:494px;width:259px;height:16px;background:#c0c0c0;"></div>
<div class="a" style="left:245px;top:510px;width:260px;height:1px;background:#008080;"></div>
<div class="a" style="left:504px;top:494px;width:1px;height:17px;background:#008080;"></div>
<div class="a" style="left:262px;top:494px;width:1px;height:17px;background:#008080;"></div>
<div class="a" style="left:263px;top:494px;width:1px;height:16px;background:#fff;"></div>
<div class="a" style="left:249px;top:500px;width:10px;height:1px;background:#fff;"></div>
<div class="a" style="left:249px;top:501px;width:9px;height:1px;background:#fff;"></div>
<div class="a" style="left:258px;top:501px;width:1px;height:1px;background:#008080;"></div>
<div class="a" style="left:249px;top:502px;width:1px;height:1px;background:#fff;"></div>
<div class="a" style="left:250px;top:502px;width:9px;height:1px;background:#008080;"></div>
<div class="a" style="left:249px;top:503px;width:10px;height:1px;background:#008080;"></div>
<div class="a" style="left:486px;top:494px;width:1px;height:17px;background:#008080;"></div>
<div class="a" style="left:487px;top:494px;width:1px;height:16px;background:#fff;"></div>
<div class="a" style="left:493px;top:499px;width:6px;height:6px;background:#008080;"></div>
<div class="a" style="left:493px;top:499px;width:6px;height:1px;background:#fff;"></div>
<div class="a" style="left:493px;top:500px;width:5px;height:1px;background:#fff;"></div>
<div class="a" style="left:493px;top:501px;width:2px;height:2px;background:#fff;"></div>
<div class="a" style="left:493px;top:503px;width:1px;height:1px;background:#fff;"></div>
<div class="a" style="left:495px;top:501px;width:2px;height:1px;background:#c0c0c0;"></div>
<div class="a" style="left:495px;top:502px;width:1px;height:1px;background:#c0c0c0;"></div>
<div class="a" style="left:245px;top:511px;width:260px;height:1px;background:#808080;"></div>
<div class="a" style="left:245px;top:511px;width:1px;height:113px;background:#808080;"></div>
<div class="a" style="left:246px;top:512px;width:259px;height:112px;background:#c0c0c0;"></div>
<div class="a" style="left:243px;top:625px;width:1px;height:2px;background:#808080;"></div>
<div class="a" style="left:242px;top:626px;width:1px;height:1px;background:#808080;"></div>
<div class="t" style="left:341px;top:496px;font-size:12px;line-height:14px;font-weight:400;color:#000;letter-spacing:0.000px;font-family:'Liberation Sans';">Alloc Integer</div>
<div class="a" style="left:275px;top:511px;width:190px;height:113px;background:#808080;"></div>
<div class="a" style="left:275px;top:511px;width:189px;height:112px;background:#fff;"></div>
<div class="a" style="left:276px;top:512px;width:188px;height:111px;background:#c0c0c0;"></div>
<div class="t" style="left:284px;top:520px;font-size:12px;line-height:14px;font-weight:400;color:#000;letter-spacing:0.571px;font-family:'Liberation Sans';">Num Dims</div>
<div class="a" style="left:385px;top:517px;width:73px;height:19px;background:#fff;"></div>
<div class="a" style="left:385px;top:517px;width:72px;height:18px;background:#808080;"></div>
<div class="a" style="left:386px;top:518px;width:71px;height:17px;background:#000;"></div>
<div class="a" style="left:387px;top:519px;width:69px;height:15px;background:#fff;"></div>
<div class="a" style="left:386px;top:534px;width:71px;height:1px;background:#dfdfdf;"></div>
<div class="a" style="left:456px;top:518px;width:1px;height:17px;background:#dfdfdf;"></div>
<div class="a" style="left:440px;top:519px;width:16px;height:15px;background:#c0c0c0;box-shadow:inset 1px 1px #fff,inset -1px -1px #000,inset -2px -2px #808080;"></div>
<svg class="a" style="left:444px;top:524px" width="7" height="4" viewBox="0 0 7 4" shape-rendering="crispEdges"><path d="M0 0 H7 L3.5 4 Z" fill="#000"/></svg>
<div class="t" style="left:410px;top:520px;font-size:12px;line-height:14px;font-weight:400;color:#000;letter-spacing:0.000px;font-family:'Liberation Sans';">1</div>
<div class="a" style="left:281px;top:541px;width:111px;height:19px;background:#fff;"></div>
<div class="a" style="left:281px;top:541px;width:110px;height:18px;background:#808080;"></div>
<div class="a" style="left:282px;top:542px;width:109px;height:17px;background:#000;"></div>
<div class="a" style="left:283px;top:543px;width:107px;height:15px;background:#fff;"></div>
<div class="a" style="left:282px;top:558px;width:109px;height:1px;background:#dfdfdf;"></div>
<div class="a" style="left:390px;top:542px;width:1px;height:17px;background:#dfdfdf;"></div>
<div class="a" style="left:374px;top:543px;width:16px;height:15px;background:#c0c0c0;box-shadow:inset 1px 1px #fff,inset -1px -1px #000,inset -2px -2px #808080;"></div>
<svg class="a" style="left:378px;top:548px" width="7" height="4" viewBox="0 0 7 4" shape-rendering="crispEdges"><path d="M0 0 H7 L3.5 4 Z" fill="#000"/></svg>
<div class="t" style="left:303px;top:544px;font-size:12px;line-height:14px;font-weight:400;color:#000;letter-spacing:0.111px;font-family:'Liberation Sans';">Init Value</div>
<div class="a" style="left:397px;top:541px;width:62px;height:19px;background:#fff;"></div>
<div class="a" style="left:397px;top:541px;width:61px;height:18px;background:#808080;"></div>
<div class="a" style="left:398px;top:542px;width:60px;height:17px;background:#000;"></div>
<div class="a" style="left:399px;top:543px;width:58px;height:15px;background:#fff;"></div>
<div class="a" style="left:398px;top:558px;width:60px;height:1px;background:#dfdfdf;"></div>
<div class="a" style="left:457px;top:542px;width:1px;height:17px;background:#dfdfdf;"></div>
<div class="t" style="left:424px;top:544px;font-size:12px;line-height:14px;font-weight:400;color:#000;letter-spacing:0.000px;font-family:'Liberation Sans';">0</div>
<div class="a" style="left:281px;top:566px;width:179px;height:52px;background:#fff;"></div>
<div class="a" style="left:281px;top:566px;width:178px;height:51px;background:#808080;"></div>
<div class="a" style="left:282px;top:567px;width:177px;height:50px;background:#c0c0c0;"></div>
<div class="t" style="left:306px;top:576px;font-size:12px;line-height:14px;font-weight:400;color:#000;letter-spacing:1.500px;font-family:'Liberation Sans';">Dim</div>
<div class="t" style="left:390px;top:574px;font-size:12px;line-height:14px;font-weight:400;color:#000;letter-spacing:0.333px;font-family:'Liberation Sans';">Size</div>
<div class="t" style="left:315px;top:595px;font-size:12px;line-height:14px;font-weight:400;color:#000;letter-spacing:0.000px;font-family:'Liberation Sans';">1</div>
<div class="a" style="left:353px;top:592px;width:99px;height:19px;background:#fff;"></div>
<div class="a" style="left:353px;top:592px;width:98px;height:18px;background:#808080;"></div>
<div class="a" style="left:354px;top:593px;width:97px;height:17px;background:#000;"></div>
<div class="a" style="left:355px;top:594px;width:95px;height:15px;background:#fff;"></div>
<div class="a" style="left:354px;top:609px;width:97px;height:1px;background:#dfdfdf;"></div>
<div class="a" style="left:450px;top:593px;width:1px;height:17px;background:#dfdfdf;"></div>
<div class="t" style="left:398px;top:596px;font-size:12px;line-height:14px;font-weight:400;color:#000;letter-spacing:0.000px;font-family:'Liberation Sans';">2</div>
<div class="a" style="left:466px;top:558px;width:39px;height:19px;background:#808080;"></div>
<div class="a" style="left:466px;top:558px;width:38px;height:18px;background:#fff;"></div>
<div class="a" style="left:467px;top:559px;width:37px;height:17px;background:#c0c0c0;"></div>
<div class="t" style="left:471px;top:560px;font-size:12px;line-height:14px;font-weight:400;color:#000;letter-spacing:-0.250px;font-family:'Liberation Sans';">Array</div>
<div class="a" style="left:505px;top:564px;width:3px;height:7px;background:#000;"></div>
<div class="a" style="left:372px;top:490px;width:7px;height:3px;background:#000;"></div>
<div class="a" style="left:372px;top:624px;width:7px;height:3px;background:#000;"></div>
<div class="a" style="left:559px;top:504px;width:155px;height:110px;background:#808080;"></div>
<div class="a" style="left:560px;top:505px;width:152px;height:107px;background:#fff;"></div>
<div class="a" style="left:561px;top:506px;width:150px;height:16px;background:#c0c0c0;"></div>
<div class="a" style="left:560px;top:522px;width:151px;height:1px;background:#008080;"></div>
<div class="a" style="left:710px;top:506px;width:1px;height:17px;background:#008080;"></div>
<div class="a" style="left:577px;top:506px;width:1px;height:17px;background:#008080;"></div>
<div class="a" style="left:578px;top:506px;width:1px;height:16px;background:#fff;"></div>
<div class="a" style="left:564px;top:512px;width:10px;height:1px;background:#fff;"></div>
<div class="a" style="left:564px;top:513px;width:9px;height:1px;background:#fff;"></div>
<div class="a" style="left:573px;top:513px;width:1px;height:1px;background:#008080;"></div>
<div class="a" style="left:564px;top:514px;width:1px;height:1px;background:#fff;"></div>
<div class="a" style="left:565px;top:514px;width:9px;height:1px;background:#008080;"></div>
<div class="a" style="left:564px;top:515px;width:10px;height:1px;background:#008080;"></div>
<div class="a" style="left:692px;top:506px;width:1px;height:17px;background:#008080;"></div>
<div class="a" style="left:693px;top:506px;width:1px;height:16px;background:#fff;"></div>
<div class="a" style="left:699px;top:511px;width:6px;height:6px;background:#008080;"></div>
<div class="a" style="left:699px;top:511px;width:6px;height:1px;background:#fff;"></div>
<div class="a" style="left:699px;top:512px;width:5px;height:1px;background:#fff;"></div>
<div class="a" style="left:699px;top:513px;width:2px;height:2px;background:#fff;"></div>
<div class="a" style="left:699px;top:515px;width:1px;height:1px;background:#fff;"></div>
<div class="a" style="left:701px;top:513px;width:2px;height:1px;background:#c0c0c0;"></div>
<div class="a" style="left:701px;top:514px;width:1px;height:1px;background:#c0c0c0;"></div>
<div class="a" style="left:560px;top:523px;width:151px;height:1px;background:#808080;"></div>
<div class="a" style="left:560px;top:523px;width:1px;height:88px;background:#808080;"></div>
<div class="a" style="left:561px;top:524px;width:150px;height:87px;background:#c0c0c0;"></div>
<div class="a" style="left:558px;top:612px;width:1px;height:2px;background:#808080;"></div>
<div class="a" style="left:557px;top:613px;width:1px;height:1px;background:#808080;"></div>
<div class="t" style="left:620px;top:508px;font-size:12px;line-height:14px;font-weight:400;color:#000;letter-spacing:0.000px;font-family:'Liberation Sans';">a[2]=b</div>
<div class="a" style="left:590px;top:523px;width:92px;height:88px;background:#808080;"></div>
<div class="a" style="left:590px;top:523px;width:91px;height:87px;background:#fff;"></div>
<div class="a" style="left:591px;top:524px;width:90px;height:86px;background:#c0c0c0;"></div>
<div class="a" style="left:561px;top:559px;width:29px;height:18px;background:#808080;"></div>
<div class="a" style="left:561px;top:559px;width:28px;height:17px;background:#fff;"></div>
<div class="a" style="left:562px;top:560px;width:27px;height:16px;background:#c0c0c0;"></div>
<div class="t" style="left:572px;top:560px;font-size:12px;line-height:14px;font-weight:400;color:#000;letter-spacing:0.000px;font-family:'Liberation Sans';">a</div>
<div class="a" style="left:682px;top:559px;width:29px;height:18px;background:#808080;"></div>
<div class="a" style="left:682px;top:559px;width:28px;height:17px;background:#fff;"></div>
<div class="a" style="left:683px;top:560px;width:27px;height:16px;background:#c0c0c0;"></div>
<div class="t" style="left:692px;top:560px;font-size:12px;line-height:14px;font-weight:400;color:#000;letter-spacing:0.000px;font-family:'Liberation Sans';">a</div>
<div class="a" style="left:597px;top:530px;width:77px;height:74px;background:#fff;box-shadow:inset 1px 1px #000,inset -1px -1px #dfdfdf;"></div>
<div class="t" style="left:598px;top:532px;font-size:12px;line-height:14px;font-weight:400;color:#000;letter-spacing:0.143px;font-family:'Liberation Sans';">a[0]=13;</div>
<div class="t" style="left:598px;top:547px;font-size:12px;line-height:14px;font-weight:400;color:#000;letter-spacing:0.143px;font-family:'Liberation Sans';">a[1]=15;</div>
<div class="a" style="left:658px;top:545px;width:15px;height:44px;background:#c0c0c0;"></div>
<div class="a" style="left:658px;top:531px;width:15px;height:15px;background:#c0c0c0;box-shadow:inset 1px 1px #fff,inset -1px -1px #000,inset -2px -2px #808080;"></div>
<svg class="a" style="left:662px;top:536px" width="7" height="4" viewBox="0 0 7 4" shape-rendering="crispEdges"><path d="M0 4 H7 L3.5 0 Z" fill="#000"/></svg>
<div class="a" style="left:658px;top:546px;width:15px;height:34px;background:#c0c0c0;box-shadow:inset 1px 1px #fff,inset -1px -1px #000,inset -2px -2px #808080;"></div>
<div class="a" style="left:658px;top:589px;width:15px;height:15px;background:#c0c0c0;box-shadow:inset 1px 1px #fff,inset -1px -1px #000,inset -2px -2px #808080;"></div>
<svg class="a" style="left:662px;top:594px" width="7" height="4" viewBox="0 0 7 4" shape-rendering="crispEdges"><path d="M0 0 H7 L3.5 4 Z" fill="#000"/></svg>
<div class="a" style="left:557px;top:564px;width:3px;height:7px;background:#000;"></div>
<div class="a" style="left:711px;top:564px;width:3px;height:7px;background:#000;"></div>
<div class="a" style="left:632px;top:502px;width:7px;height:3px;background:#000;"></div>
<div class="a" style="left:632px;top:611px;width:7px;height:3px;background:#000;"></div>
<div class="a" style="left:850px;top:520px;width:113px;height:78px;background:#808080;"></div>
<div class="a" style="left:851px;top:521px;width:110px;height:75px;background:#fff;"></div>
<div class="a" style="left:852px;top:522px;width:108px;height:16px;background:#c0c0c0;"></div>
<div class="a" style="left:851px;top:538px;width:109px;height:1px;background:#008080;"></div>
<div class="a" style="left:959px;top:522px;width:1px;height:17px;background:#008080;"></div>
<div class="a" style="left:868px;top:522px;width:1px;height:17px;background:#008080;"></div>
<div class="a" style="left:869px;top:522px;width:1px;height:16px;background:#fff;"></div>
<div class="a" style="left:855px;top:528px;width:10px;height:1px;background:#fff;"></div>
<div class="a" style="left:855px;top:529px;width:9px;height:1px;background:#fff;"></div>
<div class="a" style="left:864px;top:529px;width:1px;height:1px;background:#008080;"></div>
<div class="a" style="left:855px;top:530px;width:1px;height:1px;background:#fff;"></div>
<div class="a" style="left:856px;top:530px;width:9px;height:1px;background:#008080;"></div>
<div class="a" style="left:855px;top:531px;width:10px;height:1px;background:#008080;"></div>
<div class="a" style="left:941px;top:522px;width:1px;height:17px;background:#008080;"></div>
<div class="a" style="left:942px;top:522px;width:1px;height:16px;background:#fff;"></div>
<div class="a" style="left:948px;top:527px;width:6px;height:6px;background:#008080;"></div>
<div class="a" style="left:948px;top:527px;width:6px;height:1px;background:#fff;"></div>
<div class="a" style="left:948px;top:528px;width:5px;height:1px;background:#fff;"></div>
<div class="a" style="left:948px;top:529px;width:2px;height:2px;background:#fff;"></div>
<div class="a" style="left:948px;top:531px;width:1px;height:1px;background:#fff;"></div>
<div class="a" style="left:950px;top:529px;width:2px;height:1px;background:#c0c0c0;"></div>
<div class="a" style="left:950px;top:530px;width:1px;height:1px;background:#c0c0c0;"></div>
<div class="a" style="left:852px;top:540px;width:108px;height:55px;background:#c0c0c0;"></div>
<div class="a" style="left:959px;top:539px;width:1px;height:56px;background:#808080;"></div>
<div class="a" style="left:852px;top:594px;width:108px;height:1px;background:#808080;"></div>
<div class="a" style="left:849px;top:596px;width:1px;height:2px;background:#808080;"></div>
<div class="a" style="left:848px;top:597px;width:1px;height:1px;background:#808080;"></div>
<div class="t" style="left:871px;top:523px;font-size:12px;line-height:14px;font-weight:400;color:#000;letter-spacing:0.200px;font-family:'Liberation Sans';">AlphaNum...</div>
<div class="t" style="left:853px;top:545px;font-size:12px;line-height:14px;font-weight:400;color:#000;letter-spacing:0.000px;font-family:'Liberation Sans';">0: 13</div>
<div class="t" style="left:852px;top:572px;font-size:12px;line-height:14px;font-weight:400;color:#000;letter-spacing:0.250px;font-family:'Liberation Sans';">1: 15</div>
<div class="a" style="left:848px;top:564px;width:3px;height:7px;background:#000;"></div>
<div class="a" style="left:922px;top:518px;width:7px;height:3px;background:#000;"></div>
<div class="a" style="left:922px;top:595px;width:7px;height:3px;background:#000;"></div>
<svg class="a" style="left:596px;top:684px" width="78" height="26" viewBox="0 0 78 26"><path d="M72 6 L75 3 V24 H3 L6 21 H72 Z" fill="#008080"/></svg>
<div class="a" style="left:602px;top:690px;width:66px;height:15px;background:#c0c0c0;"></div>
<div class="t" style="left:605px;top:691px;font-size:12px;line-height:14px;font-weight:400;color:#000;letter-spacing:0.222px;font-family:'Liberation Sans';">Get handle</div>
<div class="a" style="left:632px;top:687px;width:7px;height:3px;background:#000;"></div>
<div class="a" style="left:632px;top:705px;width:7px;height:3px;background:#000;"></div>
<div class="a" style="left:668px;top:694px;width:3px;height:7px;background:#000;"></div>
<div class="a" style="left:575px;top:764px;width:82px;height:51px;background:#808080;"></div>
<div class="a" style="left:576px;top:765px;width:79px;height:48px;background:#fff;"></div>
<div class="a" style="left:577px;top:766px;width:77px;height:16px;background:#c0c0c0;"></div>
<div class="a" style="left:576px;top:782px;width:78px;height:1px;background:#008080;"></div>
<div class="a" style="left:653px;top:766px;width:1px;height:17px;background:#008080;"></div>
<div class="a" style="left:593px;top:766px;width:1px;height:17px;background:#008080;"></div>
<div class="a" style="left:594px;top:766px;width:1px;height:16px;background:#fff;"></div>
<div class="a" style="left:580px;top:772px;width:10px;height:1px;background:#fff;"></div>
<div class="a" style="left:580px;top:773px;width:9px;height:1px;background:#fff;"></div>
<div class="a" style="left:589px;top:773px;width:1px;height:1px;background:#008080;"></div>
<div class="a" style="left:580px;top:774px;width:1px;height:1px;background:#fff;"></div>
<div class="a" style="left:581px;top:774px;width:9px;height:1px;background:#008080;"></div>
<div class="a" style="left:580px;top:775px;width:10px;height:1px;background:#008080;"></div>
<div class="a" style="left:635px;top:766px;width:1px;height:17px;background:#008080;"></div>
<div class="a" style="left:636px;top:766px;width:1px;height:16px;background:#fff;"></div>
<div class="a" style="left:642px;top:771px;width:6px;height:6px;background:#008080;"></div>
<div class="a" style="left:642px;top:771px;width:6px;height:1px;background:#fff;"></div>
<div class="a" style="left:642px;top:772px;width:5px;height:1px;background:#fff;"></div>
<div class="a" style="left:642px;top:773px;width:2px;height:2px;background:#fff;"></div>
<div class="a" style="left:642px;top:775px;width:1px;height:1px;background:#fff;"></div>
<div class="a" style="left:644px;top:773px;width:2px;height:1px;background:#c0c0c0;"></div>
<div class="a" style="left:644px;top:774px;width:1px;height:1px;background:#c0c0c0;"></div>
<div class="a" style="left:577px;top:784px;width:77px;height:28px;background:#c0c0c0;"></div>
<div class="a" style="left:653px;top:783px;width:1px;height:29px;background:#808080;"></div>
<div class="a" style="left:577px;top:811px;width:77px;height:1px;background:#808080;"></div>
<div class="a" style="left:574px;top:813px;width:1px;height:2px;background:#808080;"></div>
<div class="a" style="left:573px;top:814px;width:1px;height:1px;background:#808080;"></div>
<div class="a" style="left:595px;top:766px;width:39px;height:16px;overflow:hidden">
<div class="t" style="left:2px;top:1px;font-size:12px;line-height:14px;font-weight:400;color:#000;letter-spacing:0.000px;font-family:'Liberation Sans';">Integer</div>
</div>
<div class="a" style="left:582px;top:789px;width:67px;height:19px;background:#fff;"></div>
<div class="a" style="left:582px;top:789px;width:66px;height:18px;background:#808080;"></div>
<div class="a" style="left:583px;top:790px;width:65px;height:17px;background:#000;"></div>
<div class="a" style="left:584px;top:791px;width:63px;height:15px;background:#fff;"></div>
<div class="a" style="left:583px;top:806px;width:65px;height:1px;background:#dfdfdf;"></div>
<div class="a" style="left:647px;top:790px;width:1px;height:17px;background:#dfdfdf;"></div>
<div class="t" style="left:583px;top:792px;font-size:12px;line-height:14px;font-weight:400;color:#000;letter-spacing:0.000px;font-family:'Liberation Sans';">2</div>
<div class="a" style="left:654px;top:794px;width:3px;height:7px;background:#000;"></div>
<div class="a" style="left:612px;top:762px;width:7px;height:3px;background:#000;"></div>
<div class="a" style="left:612px;top:812px;width:7px;height:3px;background:#000;"></div>
<div class="a" style="left:761px;top:747px;width:310px;height:84px;background:#808080;"></div>
<div class="a" style="left:762px;top:748px;width:307px;height:81px;background:#fff;"></div>
<div class="a" style="left:763px;top:749px;width:305px;height:16px;background:#c0c0c0;"></div>
<div class="a" style="left:762px;top:765px;width:306px;height:1px;background:#008080;"></div>
<div class="a" style="left:1067px;top:749px;width:1px;height:17px;background:#008080;"></div>
<div class="a" style="left:779px;top:749px;width:1px;height:17px;background:#008080;"></div>
<div class="a" style="left:780px;top:749px;width:1px;height:16px;background:#fff;"></div>
<div class="a" style="left:766px;top:755px;width:10px;height:1px;background:#fff;"></div>
<div class="a" style="left:766px;top:756px;width:9px;height:1px;background:#fff;"></div>
<div class="a" style="left:775px;top:756px;width:1px;height:1px;background:#008080;"></div>
<div class="a" style="left:766px;top:757px;width:1px;height:1px;background:#fff;"></div>
<div class="a" style="left:767px;top:757px;width:9px;height:1px;background:#008080;"></div>
<div class="a" style="left:766px;top:758px;width:10px;height:1px;background:#008080;"></div>
<div class="a" style="left:1049px;top:749px;width:1px;height:17px;background:#008080;"></div>
<div class="a" style="left:1050px;top:749px;width:1px;height:16px;background:#fff;"></div>
<div class="a" style="left:1056px;top:754px;width:6px;height:6px;background:#008080;"></div>
<div class="a" style="left:1056px;top:754px;width:6px;height:1px;background:#fff;"></div>
<div class="a" style="left:1056px;top:755px;width:5px;height:1px;background:#fff;"></div>
<div class="a" style="left:1056px;top:756px;width:2px;height:2px;background:#fff;"></div>
<div class="a" style="left:1056px;top:758px;width:1px;height:1px;background:#fff;"></div>
<div class="a" style="left:1058px;top:756px;width:2px;height:1px;background:#c0c0c0;"></div>
<div class="a" style="left:1058px;top:757px;width:1px;height:1px;background:#c0c0c0;"></div>
<div class="a" style="left:762px;top:766px;width:306px;height:1px;background:#808080;"></div>
<div class="a" style="left:762px;top:766px;width:1px;height:62px;background:#808080;"></div>
<div class="a" style="left:763px;top:767px;width:305px;height:61px;background:#c0c0c0;"></div>
<div class="a" style="left:760px;top:829px;width:1px;height:2px;background:#808080;"></div>
<div class="a" style="left:759px;top:830px;width:1px;height:1px;background:#808080;"></div>
<div class="t" style="left:851px;top:751px;font-size:12px;line-height:14px;font-weight:400;color:#000;letter-spacing:0.143px;font-family:'Liberation Sans';">Call I2CviaLP.I2cWrite</div>
<div class="a" style="left:822px;top:766px;width:176px;height:62px;background:#808080;"></div>
<div class="a" style="left:822px;top:766px;width:175px;height:61px;background:#fff;"></div>
<div class="a" style="left:823px;top:767px;width:174px;height:60px;background:#c0c0c0;"></div>
<div class="t" style="left:864px;top:777px;font-size:12px;line-height:14px;font-weight:400;color:#000;letter-spacing:0.250px;font-family:'Liberation Sans';">Function Name</div>
<div class="a" style="left:828px;top:799px;width:165px;height:19px;background:#fff;"></div>
<div class="a" style="left:828px;top:799px;width:164px;height:18px;background:#808080;"></div>
<div class="a" style="left:829px;top:800px;width:163px;height:17px;background:#000;"></div>
<div class="a" style="left:830px;top:801px;width:161px;height:15px;background:#fff;"></div>
<div class="a" style="left:829px;top:816px;width:163px;height:1px;background:#dfdfdf;"></div>
<div class="a" style="left:991px;top:800px;width:1px;height:17px;background:#dfdfdf;"></div>
<div class="t" style="left:862px;top:803px;font-size:12px;line-height:14px;font-weight:400;color:#000;letter-spacing:0.125px;font-family:'Liberation Sans';">I2CviaLP.I2cWrite</div>
<div class="a" style="left:763px;top:768px;width:58px;height:19px;background:#808080;"></div>
<div class="a" style="left:763px;top:768px;width:57px;height:18px;background:#fff;"></div>
<div class="a" style="left:764px;top:769px;width:56px;height:17px;background:#c0c0c0;"></div>
<div class="t" style="left:772px;top:770px;font-size:12px;line-height:14px;font-weight:400;color:#000;letter-spacing:0.600px;font-family:'Liberation Sans';">Handle</div>
<div class="a" style="left:763px;top:788px;width:58px;height:19px;background:#808080;"></div>
<div class="a" style="left:763px;top:788px;width:57px;height:18px;background:#fff;"></div>
<div class="a" style="left:764px;top:789px;width:56px;height:17px;background:#c0c0c0;"></div>
<div class="t" style="left:771px;top:790px;font-size:12px;line-height:14px;font-weight:400;color:#000;letter-spacing:0.000px;font-family:'Liberation Sans';">BufSize</div>
<div class="a" style="left:763px;top:808px;width:58px;height:19px;background:#808080;"></div>
<div class="a" style="left:763px;top:808px;width:57px;height:18px;background:#fff;"></div>
<div class="a" style="left:764px;top:809px;width:56px;height:17px;background:#c0c0c0;"></div>
<div class="t" style="left:776px;top:810px;font-size:12px;line-height:14px;font-weight:400;color:#000;letter-spacing:0.000px;font-family:'Liberation Sans';">Buffer</div>
<div class="a" style="left:999px;top:768px;width:69px;height:19px;background:#808080;"></div>
<div class="a" style="left:999px;top:768px;width:68px;height:18px;background:#fff;"></div>
<div class="a" style="left:1000px;top:769px;width:67px;height:17px;background:#c0c0c0;"></div>
<div class="t" style="left:1006px;top:771px;font-size:12px;line-height:14px;font-weight:400;color:#000;letter-spacing:0.250px;font-family:'Liberation Sans';">Ret Value</div>
<div class="a" style="left:999px;top:808px;width:69px;height:19px;background:#808080;"></div>
<div class="a" style="left:999px;top:808px;width:68px;height:18px;background:#fff;"></div>
<div class="a" style="left:1000px;top:809px;width:67px;height:17px;background:#c0c0c0;"></div>
<div class="t" style="left:1017px;top:810px;font-size:12px;line-height:14px;font-weight:400;color:#000;letter-spacing:0.000px;font-family:'Liberation Sans';">Buffer</div>
<div class="a" style="left:759px;top:774px;width:3px;height:7px;background:#000;"></div>
<div class="a" style="left:759px;top:794px;width:3px;height:7px;background:#000;"></div>
<div class="a" style="left:759px;top:814px;width:3px;height:7px;background:#000;"></div>
<div class="a" style="left:1068px;top:774px;width:3px;height:7px;background:#000;"></div>
<div class="a" style="left:1068px;top:814px;width:3px;height:7px;background:#000;"></div>
<div class="a" style="left:912px;top:745px;width:7px;height:3px;background:#000;"></div>
<div class="a" style="left:912px;top:828px;width:7px;height:3px;background:#000;"></div>
<div class="a" style="left:1125px;top:679px;width:142px;height:41px;background:#808080;"></div>
<div class="a" style="left:1126px;top:680px;width:139px;height:38px;background:#fff;"></div>
<div class="a" style="left:1127px;top:681px;width:137px;height:16px;background:#c0c0c0;"></div>
<div class="a" style="left:1126px;top:697px;width:138px;height:1px;background:#008080;"></div>
<div class="a" style="left:1263px;top:681px;width:1px;height:17px;background:#008080;"></div>
<div class="a" style="left:1143px;top:681px;width:1px;height:17px;background:#008080;"></div>
<div class="a" style="left:1144px;top:681px;width:1px;height:16px;background:#fff;"></div>
<div class="a" style="left:1130px;top:687px;width:10px;height:1px;background:#fff;"></div>
<div class="a" style="left:1130px;top:688px;width:9px;height:1px;background:#fff;"></div>
<div class="a" style="left:1139px;top:688px;width:1px;height:1px;background:#008080;"></div>
<div class="a" style="left:1130px;top:689px;width:1px;height:1px;background:#fff;"></div>
<div class="a" style="left:1131px;top:689px;width:9px;height:1px;background:#008080;"></div>
<div class="a" style="left:1130px;top:690px;width:10px;height:1px;background:#008080;"></div>
<div class="a" style="left:1245px;top:681px;width:1px;height:17px;background:#008080;"></div>
<div class="a" style="left:1246px;top:681px;width:1px;height:16px;background:#fff;"></div>
<div class="a" style="left:1252px;top:686px;width:6px;height:6px;background:#008080;"></div>
<div class="a" style="left:1252px;top:686px;width:6px;height:1px;background:#fff;"></div>
<div class="a" style="left:1252px;top:687px;width:5px;height:1px;background:#fff;"></div>
<div class="a" style="left:1252px;top:688px;width:2px;height:2px;background:#fff;"></div>
<div class="a" style="left:1252px;top:690px;width:1px;height:1px;background:#fff;"></div>
<div class="a" style="left:1254px;top:688px;width:2px;height:1px;background:#c0c0c0;"></div>
<div class="a" style="left:1254px;top:689px;width:1px;height:1px;background:#c0c0c0;"></div>
<div class="a" style="left:1127px;top:699px;width:137px;height:18px;background:#c0c0c0;"></div>
<div class="a" style="left:1263px;top:698px;width:1px;height:19px;background:#808080;"></div>
<div class="a" style="left:1127px;top:716px;width:137px;height:1px;background:#808080;"></div>
<div class="a" style="left:1124px;top:718px;width:1px;height:2px;background:#808080;"></div>
<div class="a" style="left:1123px;top:719px;width:1px;height:1px;background:#808080;"></div>
<div class="t" style="left:1155px;top:682px;font-size:12px;line-height:14px;font-weight:400;color:#000;letter-spacing:0.273px;font-family:'Liberation Sans';">AlphaNumeric</div>
<div class="t" style="left:1190px;top:700px;font-size:14px;line-height:16px;font-weight:400;color:#000;letter-spacing:0.000px;font-family:'Liberation Sans';">2</div>
<div class="a" style="left:1123px;top:704px;width:3px;height:7px;background:#000;"></div>
<div class="a" style="left:1192px;top:677px;width:7px;height:3px;background:#000;"></div>
<div class="a" style="left:1192px;top:717px;width:7px;height:3px;background:#000;"></div>
<div class="a" style="left:1126px;top:741px;width:141px;height:156px;background:#808080;"></div>
<div class="a" style="left:1127px;top:742px;width:138px;height:153px;background:#fff;"></div>
<div class="a" style="left:1128px;top:743px;width:136px;height:16px;background:#c0c0c0;"></div>
<div class="a" style="left:1127px;top:759px;width:137px;height:1px;background:#008080;"></div>
<div class="a" style="left:1263px;top:743px;width:1px;height:17px;background:#008080;"></div>
<div class="a" style="left:1144px;top:743px;width:1px;height:17px;background:#008080;"></div>
<div class="a" style="left:1145px;top:743px;width:1px;height:16px;background:#fff;"></div>
<div class="a" style="left:1131px;top:749px;width:10px;height:1px;background:#fff;"></div>
<div class="a" style="left:1131px;top:750px;width:9px;height:1px;background:#fff;"></div>
<div class="a" style="left:1140px;top:750px;width:1px;height:1px;background:#008080;"></div>
<div class="a" style="left:1131px;top:751px;width:1px;height:1px;background:#fff;"></div>
<div class="a" style="left:1132px;top:751px;width:9px;height:1px;background:#008080;"></div>
<div class="a" style="left:1131px;top:752px;width:10px;height:1px;background:#008080;"></div>
<div class="a" style="left:1245px;top:743px;width:1px;height:17px;background:#008080;"></div>
<div class="a" style="left:1246px;top:743px;width:1px;height:16px;background:#fff;"></div>
<div class="a" style="left:1252px;top:748px;width:6px;height:6px;background:#008080;"></div>
<div class="a" style="left:1252px;top:748px;width:6px;height:1px;background:#fff;"></div>
<div class="a" style="left:1252px;top:749px;width:5px;height:1px;background:#fff;"></div>
<div class="a" style="left:1252px;top:750px;width:2px;height:2px;background:#fff;"></div>
<div class="a" style="left:1252px;top:752px;width:1px;height:1px;background:#fff;"></div>
<div class="a" style="left:1254px;top:750px;width:2px;height:1px;background:#c0c0c0;"></div>
<div class="a" style="left:1254px;top:751px;width:1px;height:1px;background:#c0c0c0;"></div>
<div class="a" style="left:1128px;top:761px;width:136px;height:133px;background:#c0c0c0;"></div>
<div class="a" style="left:1263px;top:760px;width:1px;height:134px;background:#808080;"></div>
<div class="a" style="left:1128px;top:893px;width:136px;height:1px;background:#808080;"></div>
<div class="a" style="left:1125px;top:895px;width:1px;height:2px;background:#808080;"></div>
<div class="a" style="left:1124px;top:896px;width:1px;height:1px;background:#808080;"></div>
<div class="t" style="left:1156px;top:744px;font-size:12px;line-height:14px;font-weight:400;color:#000;letter-spacing:0.273px;font-family:'Liberation Sans';">AlphaNumeric</div>
<div class="t" style="left:1129px;top:786px;font-size:12px;line-height:14px;font-weight:400;color:#000;letter-spacing:0.000px;font-family:'Liberation Sans';">0: 13</div>
<div class="t" style="left:1128px;top:852px;font-size:12px;line-height:14px;font-weight:400;color:#000;letter-spacing:0.250px;font-family:'Liberation Sans';">1: 15</div>
<div class="a" style="left:1124px;top:824px;width:3px;height:7px;background:#000;"></div>
<div class="a" style="left:1192px;top:739px;width:7px;height:3px;background:#000;"></div>
<div class="a" style="left:1192px;top:894px;width:7px;height:3px;background:#000;"></div>
</body></html>
